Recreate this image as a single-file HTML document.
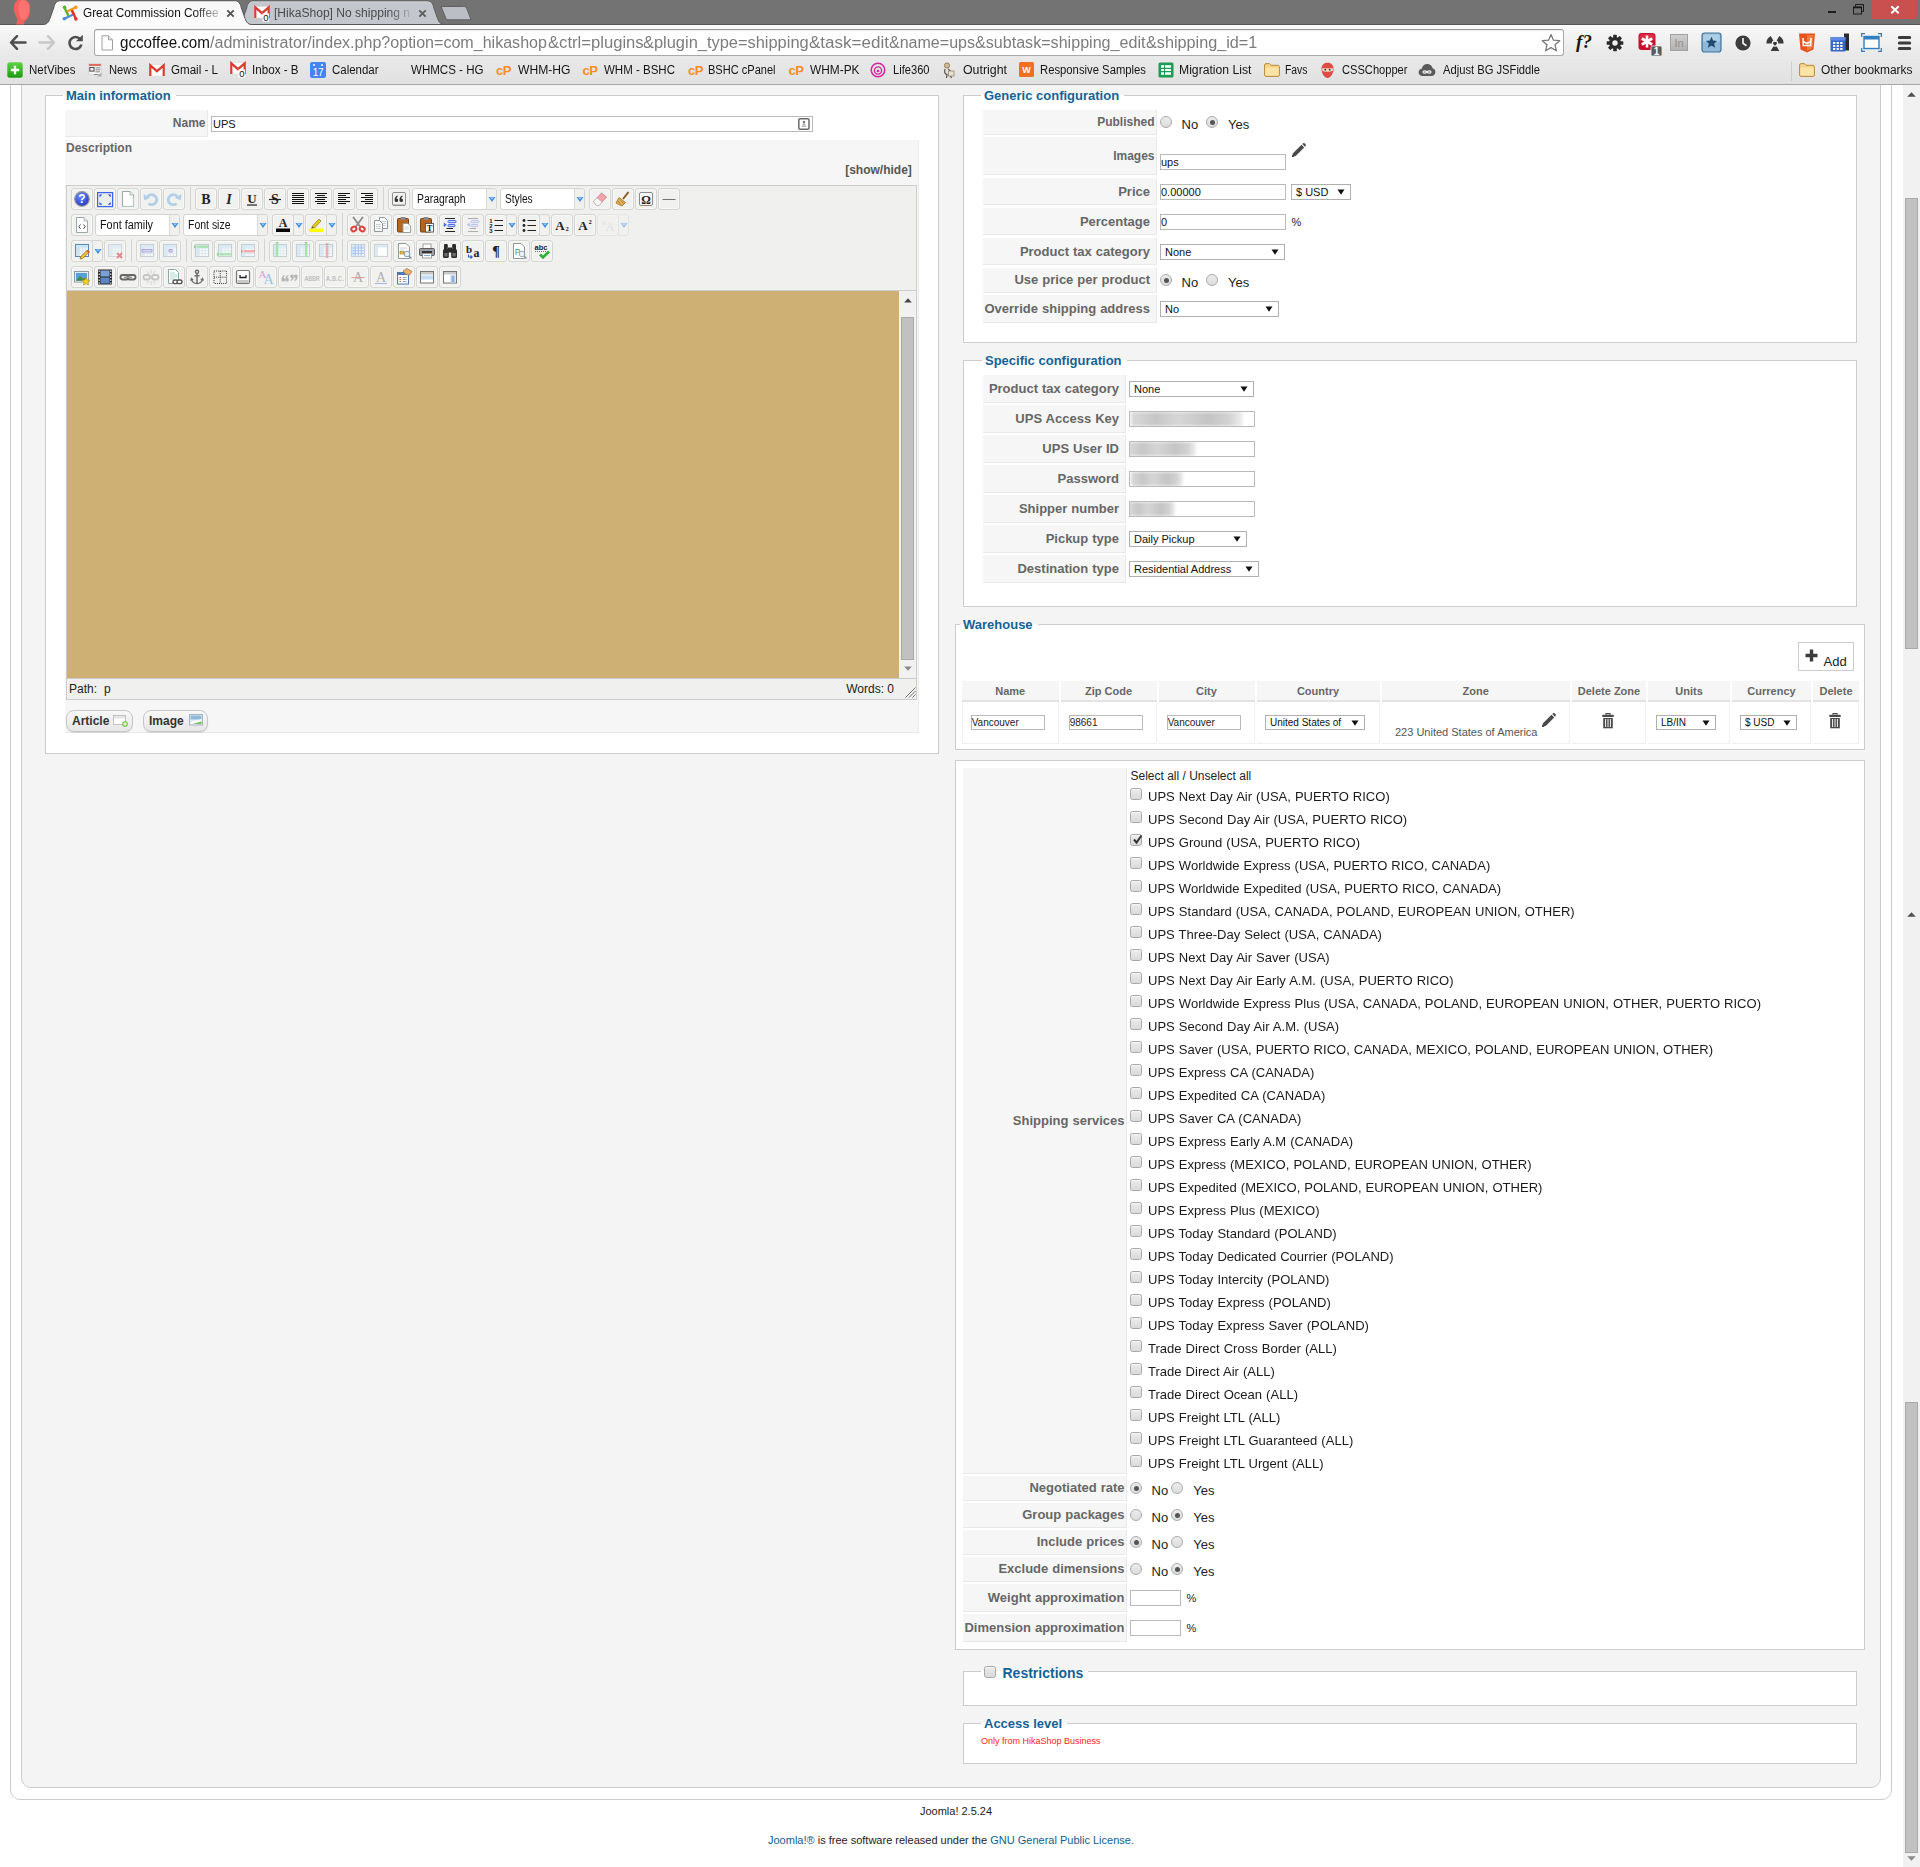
<!DOCTYPE html>
<html lang="en"><head><meta charset="utf-8"><title>Great Commission Coffee - Administration</title>
<style>
html,body{margin:0;padding:0}
body{width:1920px;height:1867px;position:relative;overflow:hidden;background:#fff;font-family:"Liberation Sans",Arial,sans-serif;font-size:13px}
#root{position:absolute;left:0;top:0;width:1920px;height:1867px;overflow:hidden}
#root div,#root span,#root svg,#root i{position:absolute;display:block}
#root span{white-space:nowrap}
</style></head>
<body><div id="root">
<div style="left:0px;top:85px;width:1920px;height:1782px;background:#fff;"></div>
<div style="left:10px;top:40px;width:1880px;height:1758px;border:1px solid #ccc;border-radius:10px;background:#fff;"></div>
<div style="left:21px;top:40px;width:1858px;height:1746px;border:1px solid #ccc;border-radius:10px;background:#f4f4f4;"></div>
<div style="left:45px;top:95px;width:894px;height:659px;box-sizing:border-box;background:#fff;border:1px solid #ccc;"></div><div style="left:63px;top:95px;width:112.703125px;height:1px;background:#fff;"></div><span style="top:87.18px;font-size:13px;line-height:17px;color:#146295;font-weight:bold;left:66.00px;transform-origin:0 50%;">Main information</span>
<div style="left:65px;top:110px;width:143px;height:27px;box-sizing:border-box;background:#f6f6f6;border-bottom:1px solid #e9e9e9;border-right:1px solid #e9e9e9;"></div><span style="top:114.84px;font-size:12px;line-height:16px;color:#666;font-weight:bold;right:1714.50px;transform-origin:100% 50%;word-spacing:.4px;">Name</span>
<div style="left:211px;top:116px;width:602px;height:16px;box-sizing:border-box;background:#fff;border:1px solid #b9b9b9;"></div><span style="top:117.15px;font-size:11px;line-height:14px;color:#111;left:213.00px;transform-origin:0 50%;">UPS</span>
<svg style="left:798px;top:118px" width="12" height="12" viewBox="0 0 12 12"><rect x="0.800" y="0.800" width="10.200" height="10.400" rx="1.200" fill="#fff" stroke="#6a6a6a" stroke-width="1.500"/><circle cx="5.900" cy="3.900" r="1.200" fill="#777"/><path d="M4.200 6.500 C4.200 5 7.600 5 7.600 6.500 Z" fill="#777"/><rect x="3.800" y="7.300" width="4.200" height="1.600" fill="#b4b4b4"/></svg>
<div style="left:65px;top:140px;width:854px;height:593px;box-sizing:border-box;background:#f6f6f6;border-bottom:1px solid #e9e9e9;border-right:1px solid #ececec;"></div>
<span style="top:139.84px;font-size:12px;line-height:16px;color:#666;font-weight:bold;left:66.00px;transform-origin:0 50%;">Description</span>
<span style="top:161.84px;font-size:12px;line-height:16px;color:#555;font-weight:bold;right:1008.20px;transform-origin:100% 50%;">[show/hide]</span>
<div style="left:66px;top:185px;width:851px;height:515px;box-sizing:border-box;background:#f0f0ee;border:1px solid #ccc;"></div>
<div class="tb" style="left:71px;top:188px;width:20px;height:20px;border:1px solid #d4d4d1;border-radius:3px;background:#f1f1ef;box-shadow:inset 0 0 0 1px rgba(255,255,255,.5);"><svg style="left:0;top:0" width="20" height="20" viewBox="0 0 20 20"><defs><radialGradient id="hg" cx=".4" cy=".3" r=".8"><stop offset="0" stop-color="#6a8cff"/><stop offset="1" stop-color="#1a2fc0"/></radialGradient></defs><circle cx="10" cy="10" r="7.300" fill="url(#hg)" stroke="#9a9a9a" stroke-width="1.200"/><text x="10" y="14.300" font-size="12" font-weight="bold" text-anchor="middle" fill="#fff" font-family="Liberation Sans, sans-serif">?</text></svg></div>
<div class="tb" style="left:94px;top:188px;width:20px;height:20px;border:1px solid #d4d4d1;border-radius:3px;background:#f1f1ef;box-shadow:inset 0 0 0 1px rgba(255,255,255,.5);"><svg style="left:0;top:0" width="20" height="20" viewBox="0 0 20 20"><rect x="2.600" y="3.600" width="15" height="14" fill="#ececec" stroke="#3f62ee" stroke-width="1.200"/><path d="M4.500 5.500 H7.300 L4.500 8.300 Z M15.700 5.500 V8.300 L12.900 5.500 Z M15.700 15.700 H12.900 L15.700 12.900 Z M4.500 15.700 V12.900 L7.300 15.700 Z" fill="#2a45d6"/></svg></div>
<div class="tb" style="left:117px;top:188px;width:20px;height:20px;border:1px solid #d4d4d1;border-radius:3px;background:#f1f1ef;box-shadow:inset 0 0 0 1px rgba(255,255,255,.5);"><svg style="left:0;top:0" width="20" height="20" viewBox="0 0 20 20"><path d="M4.500 2.500 H12 L15.500 6 V17.500 H4.500 Z" fill="#fff" stroke="#9aa" stroke-width="1"/><path d="M12 2.500 V6 H15.500" fill="#e8eef0" stroke="#9aa" stroke-width=".8"/><path d="M5 17 H15 V8" fill="none" stroke="#dfe8e8" stroke-width="1"/></svg></div>
<div class="tb" style="left:140px;top:188px;width:20px;height:20px;border:1px solid #d4d4d1;border-radius:3px;background:#f1f1ef;box-shadow:inset 0 0 0 1px rgba(255,255,255,.5);"><svg style="left:0;top:0" width="20" height="20" viewBox="0 0 20 20"><g opacity=".45"><path d="M6 9 A5 5 0 1 1 7.500 14.500" fill="none" stroke="#6aa8de" stroke-width="2.800"/><path d="M2.500 5 L3.200 11.200 L9 9 Z" fill="#6aa8de"/></g></svg></div>
<div class="tb" style="left:163px;top:188px;width:20px;height:20px;border:1px solid #d4d4d1;border-radius:3px;background:#f1f1ef;box-shadow:inset 0 0 0 1px rgba(255,255,255,.5);"><svg style="left:0;top:0" width="20" height="20" viewBox="0 0 20 20"><g opacity=".45"><path d="M14 9 A5 5 0 1 0 12.500 14.500" fill="none" stroke="#6aa8de" stroke-width="2.800"/><path d="M17.500 5 L16.800 11.200 L11 9 Z" fill="#6aa8de"/></g></svg></div>
<div style="left:190px;top:187px;width:1px;height:23px;background:#d4d4d0;"></div>
<div class="tb" style="left:195px;top:188px;width:20px;height:20px;border:1px solid #d4d4d1;border-radius:3px;background:#f1f1ef;box-shadow:inset 0 0 0 1px rgba(255,255,255,.5);"><svg style="left:0;top:0" width="20" height="20" viewBox="0 0 20 20"><text x="10" y="14.800" font-size="14" font-weight="bold" text-anchor="middle" fill="#222" font-family="Liberation Serif, serif">B</text></svg></div>
<div class="tb" style="left:218px;top:188px;width:20px;height:20px;border:1px solid #d4d4d1;border-radius:3px;background:#f1f1ef;box-shadow:inset 0 0 0 1px rgba(255,255,255,.5);"><svg style="left:0;top:0" width="20" height="20" viewBox="0 0 20 20"><text x="10" y="14.800" font-size="14" font-weight="bold" font-style="italic" text-anchor="middle" fill="#222" font-family="Liberation Serif, serif">I</text></svg></div>
<div class="tb" style="left:241px;top:188px;width:20px;height:20px;border:1px solid #d4d4d1;border-radius:3px;background:#f1f1ef;box-shadow:inset 0 0 0 1px rgba(255,255,255,.5);"><svg style="left:0;top:0" width="20" height="20" viewBox="0 0 20 20"><text x="10" y="13.800" font-size="13" font-weight="bold" text-anchor="middle" fill="#222" font-family="Liberation Serif, serif">U</text><path d="M5 16 H15" stroke="#222" stroke-width="1.200"/></svg></div>
<div class="tb" style="left:264px;top:188px;width:20px;height:20px;border:1px solid #d4d4d1;border-radius:3px;background:#f1f1ef;box-shadow:inset 0 0 0 1px rgba(255,255,255,.5);"><svg style="left:0;top:0" width="20" height="20" viewBox="0 0 20 20"><text x="10" y="14.800" font-size="14" font-weight="bold" text-anchor="middle" fill="#222" font-family="Liberation Serif, serif">S</text><path d="M4 10.500 H16" stroke="#222" stroke-width="1.200"/></svg></div>
<div class="tb" style="left:287px;top:188px;width:20px;height:20px;border:1px solid #d4d4d1;border-radius:3px;background:#f1f1ef;box-shadow:inset 0 0 0 1px rgba(255,255,255,.5);"><svg style="left:0;top:0" width="20" height="20" viewBox="0 0 20 20"><path d="M4 4.5 H16 M4 6.5 H16 M4 8.5 H16 M4 10.5 H16 M4 12.5 H16 M4 14.5 H16" stroke="#111" stroke-width="1"/></svg></div>
<div class="tb" style="left:310px;top:188px;width:20px;height:20px;border:1px solid #d4d4d1;border-radius:3px;background:#f1f1ef;box-shadow:inset 0 0 0 1px rgba(255,255,255,.5);"><svg style="left:0;top:0" width="20" height="20" viewBox="0 0 20 20"><path d="M4 4.5 H16 M6 6.5 H14 M4 8.5 H16 M6 10.5 H14 M4 12.5 H16 M6 14.5 H14" stroke="#111" stroke-width="1"/></svg></div>
<div class="tb" style="left:333px;top:188px;width:20px;height:20px;border:1px solid #d4d4d1;border-radius:3px;background:#f1f1ef;box-shadow:inset 0 0 0 1px rgba(255,255,255,.5);"><svg style="left:0;top:0" width="20" height="20" viewBox="0 0 20 20"><path d="M4 4.5 H16 M4 6.5 H12 M4 8.5 H16 M4 10.5 H12 M4 12.5 H16 M4 14.5 H12" stroke="#111" stroke-width="1"/></svg></div>
<div class="tb" style="left:356px;top:188px;width:20px;height:20px;border:1px solid #d4d4d1;border-radius:3px;background:#f1f1ef;box-shadow:inset 0 0 0 1px rgba(255,255,255,.5);"><svg style="left:0;top:0" width="20" height="20" viewBox="0 0 20 20"><path d="M4 4.5 H16 M8 6.5 H16 M4 8.5 H16 M8 10.5 H16 M4 12.5 H16 M8 14.5 H16" stroke="#111" stroke-width="1"/></svg></div>
<div style="left:383px;top:187px;width:1px;height:23px;background:#d4d4d0;"></div>
<div class="tb" style="left:388px;top:188px;width:20px;height:20px;border:1px solid #d4d4d1;border-radius:3px;background:#f1f1ef;box-shadow:inset 0 0 0 1px rgba(255,255,255,.5);"><svg style="left:0;top:0" width="20" height="20" viewBox="0 0 20 20"><rect x="3.500" y="3.500" width="13" height="13" rx="1.500" fill="#f2f2f2" stroke="#8e8e8e" stroke-width="1"/><path d="M4 15.500 H16" stroke="#c4c4c4" stroke-width="1"/><path transform="translate(5.6 6.5)" d="M0 4.600 C0 2 1.300 0.500 3.200 0 L3.200 1 C2.300 1.500 1.900 2.200 1.900 3 A1.800 1.800 0 1 1 0 4.600 Z" fill="#333"/><path transform="translate(10.4 6.5)" d="M0 4.600 C0 2 1.300 0.500 3.200 0 L3.200 1 C2.300 1.500 1.900 2.200 1.900 3 A1.800 1.800 0 1 1 0 4.600 Z" fill="#333"/></svg></div>
<div style="left:412px;top:188px;width:83px;height:20px;border:1px solid #d4d4d1;border-radius:3px;background:#fff;"></div><div style="left:486px;top:189px;width:9px;height:20px;background:#f0f0ee;border-left:1px solid #d8d8d4;border-radius:0 2px 2px 0;"><svg style="left:0.500px;top:6.500px" width="8" height="7" viewBox="0 0 8 7"><path d="M0.500 1 H7.500 L4 6 Z" fill="#3a8ee6"/><path d="M1.800 1.600 H6.200 L4 3.300 Z" fill="#a8d4fa"/></svg></div><span style="top:190.64px;font-size:12px;line-height:16px;color:#111;left:416.70px;transform-origin:0 50%;transform:scaleX(0.8656);">Paragraph</span>
<div style="left:500px;top:188px;width:83px;height:20px;border:1px solid #d4d4d1;border-radius:3px;background:#fff;"></div><div style="left:574px;top:189px;width:9px;height:20px;background:#f0f0ee;border-left:1px solid #d8d8d4;border-radius:0 2px 2px 0;"><svg style="left:0.500px;top:6.500px" width="8" height="7" viewBox="0 0 8 7"><path d="M0.500 1 H7.500 L4 6 Z" fill="#3a8ee6"/><path d="M1.800 1.600 H6.200 L4 3.300 Z" fill="#a8d4fa"/></svg></div><span style="top:190.64px;font-size:12px;line-height:16px;color:#111;left:504.70px;transform-origin:0 50%;transform:scaleX(0.8478);">Styles</span>
<div class="tb" style="left:589px;top:188px;width:20px;height:20px;border:1px solid #d4d4d1;border-radius:3px;background:#f1f1ef;box-shadow:inset 0 0 0 1px rgba(255,255,255,.5);"><svg style="left:0;top:0" width="20" height="20" viewBox="0 0 20 20"><path d="M3.500 12.500 L11.500 4 L16.500 8 L9 16.500 H6.500 Z" fill="#f3a3ac" stroke="#c9808a" stroke-width=".8"/><path d="M3.500 12.500 L7 9 L12 13 L9 16.500 H6.500 Z" fill="#fafafa" stroke="#bbb" stroke-width=".8"/></svg></div>
<div class="tb" style="left:612px;top:188px;width:20px;height:20px;border:1px solid #d4d4d1;border-radius:3px;background:#f1f1ef;box-shadow:inset 0 0 0 1px rgba(255,255,255,.5);"><svg style="left:0;top:0" width="20" height="20" viewBox="0 0 20 20"><path d="M15.500 3 L10 10" stroke="#8a5a2a" stroke-width="2"/><path d="M6 8.500 L12.500 13.500 L9 17 L3 14 Z" fill="#e2b35a" stroke="#a8782c" stroke-width=".9"/><path d="M5 12 L8 15.500 M7 10.500 L10.500 14.500" stroke="#a8782c" stroke-width=".8"/></svg></div>
<div class="tb" style="left:635px;top:188px;width:20px;height:20px;border:1px solid #d4d4d1;border-radius:3px;background:#f1f1ef;box-shadow:inset 0 0 0 1px rgba(255,255,255,.5);"><svg style="left:0;top:0" width="20" height="20" viewBox="0 0 20 20"><rect x="3.500" y="3.500" width="13" height="13" rx="1.500" fill="#f8f8f8" stroke="#8a8a8a" stroke-width="1"/><text x="10" y="14.500" font-size="12" font-weight="bold" text-anchor="middle" fill="#222" font-family="Liberation Serif, serif">Ω</text></svg></div>
<div class="tb" style="left:658px;top:188px;width:20px;height:20px;border:1px solid #d4d4d1;border-radius:3px;background:#f1f1ef;box-shadow:inset 0 0 0 1px rgba(255,255,255,.5);"><svg style="left:0;top:0" width="20" height="20" viewBox="0 0 20 20"><path d="M3.500 10.500 H16.500" stroke="#777" stroke-width="1"/></svg></div>
<div class="tb" style="left:71px;top:214px;width:20px;height:20px;border:1px solid #d4d4d1;border-radius:3px;background:#f1f1ef;box-shadow:inset 0 0 0 1px rgba(255,255,255,.5);"><svg style="left:0;top:0" width="20" height="20" viewBox="0 0 20 20"><path d="M4.500 2.500 H12 L15.500 6 V17.500 H4.500 Z" fill="#fff" stroke="#9aa" stroke-width="1"/><path d="M12 2.500 V6 H15.500" fill="#e8eef0" stroke="#9aa" stroke-width=".8"/><path d="M8.500 9.500 L6.800 11.700 L8.500 13.900 M11.500 9.500 L13.200 11.700 L11.500 13.900" fill="none" stroke="#444" stroke-width="1"/></svg></div>
<div style="left:95px;top:214px;width:83px;height:20px;border:1px solid #d4d4d1;border-radius:3px;background:#fff;"></div><div style="left:169px;top:215px;width:9px;height:20px;background:#f0f0ee;border-left:1px solid #d8d8d4;border-radius:0 2px 2px 0;"><svg style="left:0.500px;top:6.500px" width="8" height="7" viewBox="0 0 8 7"><path d="M0.500 1 H7.500 L4 6 Z" fill="#3a8ee6"/><path d="M1.800 1.600 H6.200 L4 3.300 Z" fill="#a8d4fa"/></svg></div><span style="top:216.64px;font-size:12px;line-height:16px;color:#111;left:99.70px;transform-origin:0 50%;transform:scaleX(0.9033);">Font family</span>
<div style="left:183px;top:214px;width:83px;height:20px;border:1px solid #d4d4d1;border-radius:3px;background:#fff;"></div><div style="left:257px;top:215px;width:9px;height:20px;background:#f0f0ee;border-left:1px solid #d8d8d4;border-radius:0 2px 2px 0;"><svg style="left:0.500px;top:6.500px" width="8" height="7" viewBox="0 0 8 7"><path d="M0.500 1 H7.500 L4 6 Z" fill="#3a8ee6"/><path d="M1.800 1.600 H6.200 L4 3.300 Z" fill="#a8d4fa"/></svg></div><span style="top:216.64px;font-size:12px;line-height:16px;color:#111;left:187.70px;transform-origin:0 50%;transform:scaleX(0.8732);">Font size</span>
<div class="tb" style="left:272px;top:214px;width:20px;height:20px;border:1px solid #d4d4d1;border-radius:3px;background:#f1f1ef;box-shadow:inset 0 0 0 1px rgba(255,255,255,.5);"><svg style="left:0;top:0" width="20" height="20" viewBox="0 0 20 20"><text x="10" y="12" font-size="12" font-weight="bold" text-anchor="middle" fill="#222" font-family="Liberation Serif, serif">A</text><rect x="3" y="13.500" width="14" height="3.500" fill="#000"/></svg></div>
<div style="left:293px;top:214px;width:9px;height:20px;border:1px solid #d4d4d1;border-radius:0 3px 3px 0;background:#f1f1ef;"><svg style="left:0.500px;top:7px" width="8" height="7" viewBox="0 0 8 7"><path d="M0.500 1 H7.500 L4 6 Z" fill="#3a8ee6"/><path d="M1.800 1.600 H6.200 L4 3.300 Z" fill="#a8d4fa"/></svg></div>
<div class="tb" style="left:305px;top:214px;width:20px;height:20px;border:1px solid #d4d4d1;border-radius:3px;background:#f1f1ef;box-shadow:inset 0 0 0 1px rgba(255,255,255,.5);"><svg style="left:0;top:0" width="20" height="20" viewBox="0 0 20 20"><path d="M6 11.500 L13 4 L15 6 L8.500 13 Z" fill="#e6d000" stroke="#8a7a20" stroke-width=".7"/><path d="M6 11.500 L5 14 L8.500 13 Z" fill="#555"/><rect x="3" y="13.500" width="14" height="3.500" fill="#ffff00"/></svg></div>
<div style="left:326px;top:214px;width:9px;height:20px;border:1px solid #d4d4d1;border-radius:0 3px 3px 0;background:#f1f1ef;"><svg style="left:0.500px;top:7px" width="8" height="7" viewBox="0 0 8 7"><path d="M0.500 1 H7.500 L4 6 Z" fill="#3a8ee6"/><path d="M1.800 1.600 H6.200 L4 3.300 Z" fill="#a8d4fa"/></svg></div>
<div style="left:342px;top:213px;width:1px;height:23px;background:#d4d4d0;"></div>
<div class="tb" style="left:347px;top:214px;width:20px;height:20px;border:1px solid #d4d4d1;border-radius:3px;background:#f1f1ef;box-shadow:inset 0 0 0 1px rgba(255,255,255,.5);"><svg style="left:0;top:0" width="20" height="20" viewBox="0 0 20 20"><path d="M5.500 2.500 L12 11.500 M14.500 2.500 L8 11.500" stroke="#8f8f8f" stroke-width="1.900" stroke-linecap="round"/><ellipse cx="5.800" cy="14" rx="2.600" ry="2.200" fill="none" stroke="#e0413d" stroke-width="1.900" transform="rotate(-30 5.800 14)"/><ellipse cx="14.200" cy="14" rx="2.600" ry="2.200" fill="none" stroke="#e0413d" stroke-width="1.900" transform="rotate(30 14.200 14)"/></svg></div>
<div class="tb" style="left:370px;top:214px;width:20px;height:20px;border:1px solid #d4d4d1;border-radius:3px;background:#f1f1ef;box-shadow:inset 0 0 0 1px rgba(255,255,255,.5);"><svg style="left:0;top:0" width="20" height="20" viewBox="0 0 20 20"><path d="M8.500 2.500 H13.500 L16.500 5.500 V13.500 H8.500 Z" fill="#fff" stroke="#8a9a9a" stroke-width="1"/><path d="M10 6.500 H15 M10 8.500 H15 M10 10.500 H15" stroke="#b8c4c4" stroke-width=".8"/><path d="M3.500 5.500 H8.500 L11.500 8.500 V16.500 H3.500 Z" fill="#fff" stroke="#8a9a9a" stroke-width="1"/><path d="M5 9.500 H10 M5 11.500 H10 M5 13.500 H10" stroke="#b8c4c4" stroke-width=".8"/></svg></div>
<div class="tb" style="left:393px;top:214px;width:20px;height:20px;border:1px solid #d4d4d1;border-radius:3px;background:#f1f1ef;box-shadow:inset 0 0 0 1px rgba(255,255,255,.5);"><svg style="left:0;top:0" width="20" height="20" viewBox="0 0 20 20"><rect x="3.500" y="3.500" width="11" height="13.500" rx="1" fill="#b5651d" stroke="#7a3f0f" stroke-width="1"/><rect x="6.500" y="2" width="5" height="3" rx=".8" fill="#8a8a8a"/><path d="M9 8.500 H14 L16.500 11 V17.500 H9 Z" fill="#fff" stroke="#8a9a9a" stroke-width=".9"/><path d="M10.500 12 H15 M10.500 14 H15" stroke="#b8c4c4" stroke-width=".8"/></svg></div>
<div class="tb" style="left:416px;top:214px;width:20px;height:20px;border:1px solid #d4d4d1;border-radius:3px;background:#f1f1ef;box-shadow:inset 0 0 0 1px rgba(255,255,255,.5);"><svg style="left:0;top:0" width="20" height="20" viewBox="0 0 20 20"><rect x="3.500" y="3.500" width="11" height="13.500" rx="1" fill="#b5651d" stroke="#7a3f0f" stroke-width="1"/><rect x="6.500" y="2" width="5" height="3" rx=".8" fill="#8a8a8a"/><rect x="8.500" y="8.500" width="8" height="8.500" fill="#fff" stroke="#555" stroke-width=".9"/><text x="12.500" y="15.800" font-size="8.500" font-weight="bold" text-anchor="middle" fill="#111" font-family="Liberation Serif, serif">T</text></svg></div>
<div class="tb" style="left:439px;top:214px;width:20px;height:20px;border:1px solid #d4d4d1;border-radius:3px;background:#f1f1ef;box-shadow:inset 0 0 0 1px rgba(255,255,255,.5);"><svg style="left:0;top:0" width="20" height="20" viewBox="0 0 20 20"><path d="M5 3.500 H15 M5 16.500 H15" stroke="#222" stroke-width="1"/><path d="M6.500 13.500 H13" stroke="#222" stroke-width="1"/><rect x="8" y="5.500" width="8" height="2.200" rx="1" fill="#cdd6fa" stroke="#3b5ee6" stroke-width=".9"/><rect x="8" y="9.500" width="7" height="2.200" rx="1" fill="#cdd6fa" stroke="#3b5ee6" stroke-width=".9"/><path d="M3.800 7.500 L6.800 9.700 L3.800 12 Z" fill="#3b5ee6"/></svg></div>
<div class="tb" style="left:462px;top:214px;width:20px;height:20px;border:1px solid #d4d4d1;border-radius:3px;background:#f1f1ef;box-shadow:inset 0 0 0 1px rgba(255,255,255,.5);"><svg style="left:0;top:0" width="20" height="20" viewBox="0 0 20 20"><g opacity=".33"><path d="M5 3.500 H15 M5 16.500 H15" stroke="#222" stroke-width="1"/><path d="M6.500 13.500 H13" stroke="#222" stroke-width="1"/><rect x="8" y="5.500" width="8" height="2.200" rx="1" fill="#cdd6fa" stroke="#3b5ee6" stroke-width=".9"/><rect x="8" y="9.500" width="7" height="2.200" rx="1" fill="#cdd6fa" stroke="#3b5ee6" stroke-width=".9"/><path d="M6.800 7.500 L3.800 9.700 L6.800 12 Z" fill="#3b5ee6"/></g></svg></div>
<div class="tb" style="left:485px;top:214px;width:20px;height:20px;border:1px solid #d4d4d1;border-radius:3px;background:#f1f1ef;box-shadow:inset 0 0 0 1px rgba(255,255,255,.5);"><svg style="left:0;top:0" width="20" height="20" viewBox="0 0 20 20"><path d="M8.500 5.500 H17 M8.500 10.500 H17 M8.500 15.500 H17" stroke="#222" stroke-width="1.100"/><text x="5" y="7.500" font-size="6" font-weight="bold" text-anchor="middle" fill="#222" font-family="Liberation Sans, sans-serif">1</text><text x="5" y="12.500" font-size="6" font-weight="bold" text-anchor="middle" fill="#222" font-family="Liberation Sans, sans-serif">2</text><text x="5" y="17.500" font-size="6" font-weight="bold" text-anchor="middle" fill="#222" font-family="Liberation Sans, sans-serif">3</text></svg></div>
<div style="left:506px;top:214px;width:9px;height:20px;border:1px solid #d4d4d1;border-radius:0 3px 3px 0;background:#f1f1ef;"><svg style="left:0.500px;top:7px" width="8" height="7" viewBox="0 0 8 7"><path d="M0.500 1 H7.500 L4 6 Z" fill="#3a8ee6"/><path d="M1.800 1.600 H6.200 L4 3.300 Z" fill="#a8d4fa"/></svg></div>
<div class="tb" style="left:518px;top:214px;width:20px;height:20px;border:1px solid #d4d4d1;border-radius:3px;background:#f1f1ef;box-shadow:inset 0 0 0 1px rgba(255,255,255,.5);"><svg style="left:0;top:0" width="20" height="20" viewBox="0 0 20 20"><path d="M8.500 5.500 H17 M8.500 10.500 H17 M8.500 15.500 H17" stroke="#222" stroke-width="1.100"/><circle cx="5" cy="5.500" r="1.400" fill="#222"/><circle cx="5" cy="10.500" r="1.400" fill="#222"/><circle cx="5" cy="15.500" r="1.400" fill="#222"/></svg></div>
<div style="left:539px;top:214px;width:9px;height:20px;border:1px solid #d4d4d1;border-radius:0 3px 3px 0;background:#f1f1ef;"><svg style="left:0.500px;top:7px" width="8" height="7" viewBox="0 0 8 7"><path d="M0.500 1 H7.500 L4 6 Z" fill="#3a8ee6"/><path d="M1.800 1.600 H6.200 L4 3.300 Z" fill="#a8d4fa"/></svg></div>
<div class="tb" style="left:551px;top:214px;width:20px;height:20px;border:1px solid #d4d4d1;border-radius:3px;background:#f1f1ef;box-shadow:inset 0 0 0 1px rgba(255,255,255,.5);"><svg style="left:0;top:0" width="20" height="20" viewBox="0 0 20 20"><text x="8" y="14.500" font-size="13" font-weight="bold" text-anchor="middle" fill="#222" font-family="Liberation Serif, serif">A</text><text x="15" y="16" font-size="6.500" font-weight="bold" text-anchor="middle" fill="#222" font-family="Liberation Serif, serif">2</text></svg></div>
<div class="tb" style="left:574px;top:214px;width:20px;height:20px;border:1px solid #d4d4d1;border-radius:3px;background:#f1f1ef;box-shadow:inset 0 0 0 1px rgba(255,255,255,.5);"><svg style="left:0;top:0" width="20" height="20" viewBox="0 0 20 20"><text x="8" y="14.500" font-size="13" font-weight="bold" text-anchor="middle" fill="#222" font-family="Liberation Serif, serif">A</text><text x="15" y="9" font-size="6.500" font-weight="bold" text-anchor="middle" fill="#222" font-family="Liberation Serif, serif">2</text></svg></div>
<div style="opacity:.45"><div class="tb" style="left:597px;top:214px;width:20px;height:20px;border:1px solid #d4d4d1;border-radius:3px;background:#f1f1ef;box-shadow:inset 0 0 0 1px rgba(255,255,255,.5);"><svg style="left:0;top:0" width="20" height="20" viewBox="0 0 20 20"><g opacity=".3"><text x="6" y="10" font-size="8" text-anchor="middle" fill="#777" font-family="Liberation Serif, serif">a</text><text x="12" y="16" font-size="12" text-anchor="middle" fill="#777" font-family="Liberation Serif, serif">A</text></g></svg></div><div style="left:618px;top:214px;width:9px;height:20px;border:1px solid #d4d4d1;border-radius:0 3px 3px 0;background:#f1f1ef;"><svg style="left:0.500px;top:7px" width="8" height="7" viewBox="0 0 8 7"><path d="M0.500 1 H7.500 L4 6 Z" fill="#3a8ee6"/><path d="M1.800 1.600 H6.200 L4 3.300 Z" fill="#a8d4fa"/></svg></div></div>
<div class="tb" style="left:71px;top:240px;width:20px;height:20px;border:1px solid #d4d4d1;border-radius:3px;background:#f1f1ef;box-shadow:inset 0 0 0 1px rgba(255,255,255,.5);"><svg style="left:0;top:0" width="20" height="20" viewBox="0 0 20 20"><g opacity="1"><rect x="3.500" y="3.500" width="13" height="12" fill="#fff" stroke="#a9b9c6" stroke-width="1"/><rect x="4" y="4" width="12" height="2.500" fill="#cfe6f7"/><rect x="4" y="4" width="3" height="11" fill="#cfe6f7"/><path d="M4 7 H16 M4 9.700 H16 M4 12.400 H16 M7.300 4 V15 M10.300 4 V15 M13.300 4 V15" stroke="#c4dff2" stroke-width=".8"/></g><rect x="3.500" y="3.500" width="13" height="12" fill="none" stroke="#5a87b5" stroke-width="1"/><path d="M15.500 9 L17.500 11 L10.500 17.500 L8 18 L8.800 15.500 Z" fill="#f2c230" stroke="#8a6a10" stroke-width=".7"/><path d="M15.500 9 L17.500 11 L16.600 11.900 L14.600 9.900 Z" fill="#e2403a"/></svg></div>
<div style="left:92px;top:240px;width:9px;height:20px;border:1px solid #d4d4d1;border-radius:0 3px 3px 0;background:#f1f1ef;"><svg style="left:0.500px;top:7px" width="8" height="7" viewBox="0 0 8 7"><path d="M0.500 1 H7.500 L4 6 Z" fill="#3a8ee6"/><path d="M1.800 1.600 H6.200 L4 3.300 Z" fill="#a8d4fa"/></svg></div>
<div class="tb" style="left:104px;top:240px;width:20px;height:20px;border:1px solid #d4d4d1;border-radius:3px;background:#f1f1ef;box-shadow:inset 0 0 0 1px rgba(255,255,255,.5);"><svg style="left:0;top:0" width="20" height="20" viewBox="0 0 20 20"><g opacity="0.45"><rect x="3.500" y="3.500" width="13" height="12" fill="#fff" stroke="#a9b9c6" stroke-width="1"/><rect x="4" y="4" width="12" height="2.500" fill="#cfe6f7"/><rect x="4" y="4" width="3" height="11" fill="#cfe6f7"/><path d="M4 7 H16 M4 9.700 H16 M4 12.400 H16 M7.300 4 V15 M10.300 4 V15 M13.300 4 V15" stroke="#c4dff2" stroke-width=".8"/></g><path d="M12 12 L17 17 M17 12 L12 17" stroke="#e58a8a" stroke-width="2"/></svg></div>
<div style="left:131px;top:239px;width:1px;height:23px;background:#d4d4d0;"></div>
<div class="tb" style="left:136px;top:240px;width:20px;height:20px;border:1px solid #d4d4d1;border-radius:3px;background:#f1f1ef;box-shadow:inset 0 0 0 1px rgba(255,255,255,.5);"><svg style="left:0;top:0" width="20" height="20" viewBox="0 0 20 20"><g opacity="0.6"><rect x="3.500" y="3.500" width="13" height="12" fill="#fff" stroke="#a9b9c6" stroke-width="1"/><rect x="4" y="4" width="12" height="2.500" fill="#cfe6f7"/><rect x="4" y="4" width="3" height="11" fill="#cfe6f7"/><path d="M4 7 H16 M4 9.700 H16 M4 12.400 H16 M7.300 4 V15 M10.300 4 V15 M13.300 4 V15" stroke="#c4dff2" stroke-width=".8"/></g><rect x="5" y="8.500" width="10" height="2.500" fill="#d9d2f2" stroke="#8f82d6" stroke-width=".8" opacity=".8"/></svg></div>
<div class="tb" style="left:159px;top:240px;width:20px;height:20px;border:1px solid #d4d4d1;border-radius:3px;background:#f1f1ef;box-shadow:inset 0 0 0 1px rgba(255,255,255,.5);"><svg style="left:0;top:0" width="20" height="20" viewBox="0 0 20 20"><g opacity="0.6"><rect x="3.500" y="3.500" width="13" height="12" fill="#fff" stroke="#a9b9c6" stroke-width="1"/><rect x="4" y="4" width="12" height="2.500" fill="#cfe6f7"/><rect x="4" y="4" width="3" height="11" fill="#cfe6f7"/><path d="M4 7 H16 M4 9.700 H16 M4 12.400 H16 M7.300 4 V15 M10.300 4 V15 M13.300 4 V15" stroke="#c4dff2" stroke-width=".8"/></g><rect x="9" y="8.500" width="3" height="2.500" fill="#d9d2f2" stroke="#8f82d6" stroke-width=".8" opacity=".8"/></svg></div>
<div style="left:186px;top:239px;width:1px;height:23px;background:#d4d4d0;"></div>
<div class="tb" style="left:191px;top:240px;width:20px;height:20px;border:1px solid #d4d4d1;border-radius:3px;background:#f1f1ef;box-shadow:inset 0 0 0 1px rgba(255,255,255,.5);"><svg style="left:0;top:0" width="20" height="20" viewBox="0 0 20 20"><g opacity="0.6"><rect x="3.500" y="3.500" width="13" height="12" fill="#fff" stroke="#a9b9c6" stroke-width="1"/><rect x="4" y="4" width="12" height="2.500" fill="#cfe6f7"/><rect x="4" y="4" width="3" height="11" fill="#cfe6f7"/><path d="M4 7 H16 M4 9.700 H16 M4 12.400 H16 M7.300 4 V15 M10.300 4 V15 M13.300 4 V15" stroke="#c4dff2" stroke-width=".8"/></g><rect x="5" y="4.500" width="11.500" height="2.500" rx="1" fill="#9fe09f" opacity=".8"/><path d="M2 4 L4.800 5.700 L2 7.500 Z" fill="#8fd48f"/></svg></div>
<div class="tb" style="left:214px;top:240px;width:20px;height:20px;border:1px solid #d4d4d1;border-radius:3px;background:#f1f1ef;box-shadow:inset 0 0 0 1px rgba(255,255,255,.5);"><svg style="left:0;top:0" width="20" height="20" viewBox="0 0 20 20"><g opacity="0.6"><rect x="3.500" y="3.500" width="13" height="12" fill="#fff" stroke="#a9b9c6" stroke-width="1"/><rect x="4" y="4" width="12" height="2.500" fill="#cfe6f7"/><rect x="4" y="4" width="3" height="11" fill="#cfe6f7"/><path d="M4 7 H16 M4 9.700 H16 M4 12.400 H16 M7.300 4 V15 M10.300 4 V15 M13.300 4 V15" stroke="#c4dff2" stroke-width=".8"/></g><rect x="5" y="12" width="11.500" height="2.500" rx="1" fill="#9fe09f" opacity=".8"/><path d="M2 11.500 L4.800 13.200 L2 15 Z" fill="#8fd48f"/></svg></div>
<div class="tb" style="left:237px;top:240px;width:20px;height:20px;border:1px solid #d4d4d1;border-radius:3px;background:#f1f1ef;box-shadow:inset 0 0 0 1px rgba(255,255,255,.5);"><svg style="left:0;top:0" width="20" height="20" viewBox="0 0 20 20"><g opacity="0.6"><rect x="3.500" y="3.500" width="13" height="12" fill="#fff" stroke="#a9b9c6" stroke-width="1"/><rect x="4" y="4" width="12" height="2.500" fill="#cfe6f7"/><rect x="4" y="4" width="3" height="11" fill="#cfe6f7"/><path d="M4 7 H16 M4 9.700 H16 M4 12.400 H16 M7.300 4 V15 M10.300 4 V15 M13.300 4 V15" stroke="#c4dff2" stroke-width=".8"/></g><rect x="6" y="9" width="11" height="2.500" rx=".5" fill="#f2a0a0" opacity=".85"/><path d="M3 8.500 L5.500 10.200 L3 12 Z" fill="#e98a8a"/></svg></div>
<div style="left:264px;top:239px;width:1px;height:23px;background:#d4d4d0;"></div>
<div class="tb" style="left:269px;top:240px;width:20px;height:20px;border:1px solid #d4d4d1;border-radius:3px;background:#f1f1ef;box-shadow:inset 0 0 0 1px rgba(255,255,255,.5);"><svg style="left:0;top:0" width="20" height="20" viewBox="0 0 20 20"><g opacity="0.6"><rect x="3.500" y="3.500" width="13" height="12" fill="#fff" stroke="#a9b9c6" stroke-width="1"/><rect x="4" y="4" width="12" height="2.500" fill="#cfe6f7"/><rect x="4" y="4" width="3" height="11" fill="#cfe6f7"/><path d="M4 7 H16 M4 9.700 H16 M4 12.400 H16 M7.300 4 V15 M10.300 4 V15 M13.300 4 V15" stroke="#c4dff2" stroke-width=".8"/></g><rect x="5.800" y="3" width="2.500" height="13" rx="1" fill="#9fe09f" opacity=".85"/><path d="M5.300 1 L7 3.500 L8.800 1 Z" fill="#8fd48f"/></svg></div>
<div class="tb" style="left:292px;top:240px;width:20px;height:20px;border:1px solid #d4d4d1;border-radius:3px;background:#f1f1ef;box-shadow:inset 0 0 0 1px rgba(255,255,255,.5);"><svg style="left:0;top:0" width="20" height="20" viewBox="0 0 20 20"><g opacity="0.6"><rect x="3.500" y="3.500" width="13" height="12" fill="#fff" stroke="#a9b9c6" stroke-width="1"/><rect x="4" y="4" width="12" height="2.500" fill="#cfe6f7"/><rect x="4" y="4" width="3" height="11" fill="#cfe6f7"/><path d="M4 7 H16 M4 9.700 H16 M4 12.400 H16 M7.300 4 V15 M10.300 4 V15 M13.300 4 V15" stroke="#c4dff2" stroke-width=".8"/></g><rect x="11.800" y="3" width="2.500" height="13" rx="1" fill="#9fe09f" opacity=".85"/><path d="M11.300 1 L13 3.500 L14.800 1 Z" fill="#8fd48f"/></svg></div>
<div class="tb" style="left:315px;top:240px;width:20px;height:20px;border:1px solid #d4d4d1;border-radius:3px;background:#f1f1ef;box-shadow:inset 0 0 0 1px rgba(255,255,255,.5);"><svg style="left:0;top:0" width="20" height="20" viewBox="0 0 20 20"><g opacity="0.6"><rect x="3.500" y="3.500" width="13" height="12" fill="#fff" stroke="#a9b9c6" stroke-width="1"/><rect x="4" y="4" width="12" height="2.500" fill="#cfe6f7"/><rect x="4" y="4" width="3" height="11" fill="#cfe6f7"/><path d="M4 7 H16 M4 9.700 H16 M4 12.400 H16 M7.300 4 V15 M10.300 4 V15 M13.300 4 V15" stroke="#c4dff2" stroke-width=".8"/></g><rect x="9.800" y="5" width="2.500" height="12" rx=".5" fill="#f2a0a0" opacity=".85"/><path d="M9.300 2.500 L11 5 L12.800 2.500 Z" fill="#e98a8a"/></svg></div>
<div style="left:342px;top:239px;width:1px;height:23px;background:#d4d4d0;"></div>
<div class="tb" style="left:347px;top:240px;width:20px;height:20px;border:1px solid #d4d4d1;border-radius:3px;background:#f1f1ef;box-shadow:inset 0 0 0 1px rgba(255,255,255,.5);"><svg style="left:0;top:0" width="20" height="20" viewBox="0 0 20 20"><g opacity="0.6"><rect x="3.500" y="3.500" width="13" height="12" fill="#fff" stroke="#a9b9c6" stroke-width="1"/><rect x="4" y="4" width="12" height="2.500" fill="#cfe6f7"/><rect x="4" y="4" width="3" height="11" fill="#cfe6f7"/><path d="M4 7 H16 M4 9.700 H16 M4 12.400 H16 M7.300 4 V15 M10.300 4 V15 M13.300 4 V15" stroke="#c4dff2" stroke-width=".8"/></g><path d="M4 7 H16 M4 9.700 H16 M4 12.400 H16 M7.300 4 V15 M10.300 4 V15 M13.300 4 V15" stroke="#a9c4f2" stroke-width="1"/></svg></div>
<div class="tb" style="left:370px;top:240px;width:20px;height:20px;border:1px solid #d4d4d1;border-radius:3px;background:#f1f1ef;box-shadow:inset 0 0 0 1px rgba(255,255,255,.5);"><svg style="left:0;top:0" width="20" height="20" viewBox="0 0 20 20"><g opacity="0.5"><rect x="3.500" y="3.500" width="13" height="12" fill="#fff" stroke="#a9b9c6" stroke-width="1"/><rect x="4" y="4" width="12" height="2.500" fill="#cfe6f7"/><rect x="4" y="4" width="3" height="11" fill="#cfe6f7"/><path d="M4 7 H16 M4 9.700 H16 M4 12.400 H16 M7.300 4 V15 M10.300 4 V15 M13.300 4 V15" stroke="#c4dff2" stroke-width=".8"/></g><rect x="7" y="6.500" width="8.500" height="8" fill="#fff" opacity=".9"/></svg></div>
<div class="tb" style="left:393px;top:240px;width:20px;height:20px;border:1px solid #d4d4d1;border-radius:3px;background:#f1f1ef;box-shadow:inset 0 0 0 1px rgba(255,255,255,.5);"><svg style="left:0;top:0" width="20" height="20" viewBox="0 0 20 20"><path d="M4.500 2.500 H12 L15.500 6 V17.500 H4.500 Z" fill="#fff" stroke="#8a9a9a" stroke-width="1"/><path d="M6 7 H13 M6 9 H10" stroke="#b8c4c4" stroke-width=".8"/><rect x="6" y="10.500" width="4" height="2.500" fill="#e9c13a" stroke="#8a6a10" stroke-width=".5"/><circle cx="13" cy="13" r="2.800" fill="#e6f2fa" stroke="#8a9aa8" stroke-width="1"/><path d="M15 15 L17.500 17.500" stroke="#8a9aa8" stroke-width="1.600"/></svg></div>
<div class="tb" style="left:416px;top:240px;width:20px;height:20px;border:1px solid #d4d4d1;border-radius:3px;background:#f1f1ef;box-shadow:inset 0 0 0 1px rgba(255,255,255,.5);"><svg style="left:0;top:0" width="20" height="20" viewBox="0 0 20 20"><rect x="6" y="3" width="8" height="5" fill="#fff" stroke="#8a8a8a" stroke-width=".8"/><rect x="2.500" y="7.500" width="15" height="7" rx="1" fill="#9a9da3" stroke="#555" stroke-width=".9"/><rect x="5" y="10" width="10" height="2" fill="#333"/><rect x="5.500" y="12.500" width="9" height="4.500" fill="#fff" stroke="#8a8a8a" stroke-width=".8"/><path d="M7 14.500 H13" stroke="#7ab0e0" stroke-width="1"/></svg></div>
<div class="tb" style="left:439px;top:240px;width:20px;height:20px;border:1px solid #d4d4d1;border-radius:3px;background:#f1f1ef;box-shadow:inset 0 0 0 1px rgba(255,255,255,.5);"><svg style="left:0;top:0" width="20" height="20" viewBox="0 0 20 20"><g fill="#2b2b2b"><rect x="3" y="8" width="5.800" height="9" rx="1.500"/><rect x="11.200" y="8" width="5.800" height="9" rx="1.500"/><rect x="4" y="3" width="3.800" height="6" rx="1"/><rect x="12.200" y="3" width="3.800" height="6" rx="1"/><rect x="8" y="6.500" width="4" height="5"/></g><rect x="4.200" y="12" width="3.400" height="3.500" fill="#6a6a6a"/><rect x="12.400" y="12" width="3.400" height="3.500" fill="#6a6a6a"/></svg></div>
<div class="tb" style="left:462px;top:240px;width:20px;height:20px;border:1px solid #d4d4d1;border-radius:3px;background:#f1f1ef;box-shadow:inset 0 0 0 1px rgba(255,255,255,.5);"><svg style="left:0;top:0" width="20" height="20" viewBox="0 0 20 20"><text x="6" y="12" font-size="11" font-weight="bold" text-anchor="middle" fill="#222" font-family="Liberation Serif, serif">b</text><text x="13.500" y="16" font-size="12" font-weight="bold" text-anchor="middle" fill="#222" font-family="Liberation Serif, serif">a</text><path d="M5.500 13.500 V16 H9 M7.500 14.500 L9.200 16 L7.500 17.500" fill="none" stroke="#2a5fd0" stroke-width="1.100"/></svg></div>
<div class="tb" style="left:485px;top:240px;width:20px;height:20px;border:1px solid #d4d4d1;border-radius:3px;background:#f1f1ef;box-shadow:inset 0 0 0 1px rgba(255,255,255,.5);"><svg style="left:0;top:0" width="20" height="20" viewBox="0 0 20 20"><text x="10" y="15" font-size="14" font-weight="bold" text-anchor="middle" fill="#222" font-family="Liberation Serif, serif">¶</text></svg></div>
<div class="tb" style="left:508px;top:240px;width:20px;height:20px;border:1px solid #d4d4d1;border-radius:3px;background:#f1f1ef;box-shadow:inset 0 0 0 1px rgba(255,255,255,.5);"><svg style="left:0;top:0" width="20" height="20" viewBox="0 0 20 20"><path d="M4.500 2.500 H12 L15.500 6 V17.500 H4.500 Z" fill="#fff" stroke="#8a9a9a" stroke-width="1"/><text x="8.500" y="13.500" font-size="8.500" text-anchor="middle" fill="#3a9a5a" font-family="Liberation Sans, sans-serif">P</text><circle cx="13" cy="13" r="2.800" fill="#e6f2fa" stroke="#8a9aa8" stroke-width="1" opacity=".85"/><path d="M15 15 L17.500 17.500" stroke="#8a9aa8" stroke-width="1.600"/></svg></div>
<div class="tb" style="left:531px;top:240px;width:20px;height:20px;border:1px solid #d4d4d1;border-radius:3px;background:#f1f1ef;box-shadow:inset 0 0 0 1px rgba(255,255,255,.5);"><svg style="left:0;top:0" width="20" height="20" viewBox="0 0 20 20"><text x="9" y="8.500" font-size="7.500" font-weight="bold" text-anchor="middle" fill="#222" font-family="Liberation Sans, sans-serif">abc</text><path d="M3 10.500 H15" stroke="#555" stroke-width=".8" stroke-dasharray="1 1"/><path d="M8 13.500 L11 16.500 L17 10.500" fill="none" stroke="#2fae2f" stroke-width="2.600"/></svg></div>
<div class="tb" style="left:71px;top:266px;width:20px;height:20px;border:1px solid #d4d4d1;border-radius:3px;background:#f1f1ef;box-shadow:inset 0 0 0 1px rgba(255,255,255,.5);"><svg style="left:0;top:0" width="20" height="20" viewBox="0 0 20 20"><rect x="2.500" y="4.500" width="14" height="10.500" fill="#fff" stroke="#8a9aa8" stroke-width="1"/><rect x="3.800" y="5.800" width="11.400" height="7.900" fill="#5aa0d8"/><path d="M3.800 13.700 L8 9 L11 12 L13 10.500 L15.200 13.700 Z" fill="#4a8a3a"/><path d="M14 10.500 L15.200 13 L18 13.300 L16 15.200 L16.500 18 L14 16.600 L11.500 18 L12 15.200 L10 13.300 L12.800 13 Z" fill="#f2d020" stroke="#a88a10" stroke-width=".6"/></svg></div>
<div class="tb" style="left:94px;top:266px;width:20px;height:20px;border:1px solid #d4d4d1;border-radius:3px;background:#f1f1ef;box-shadow:inset 0 0 0 1px rgba(255,255,255,.5);"><svg style="left:0;top:0" width="20" height="20" viewBox="0 0 20 20"><rect x="3" y="2.500" width="14" height="15" fill="#2a2a2a"/><rect x="5.500" y="3.500" width="9" height="6" fill="#7aa0d8"/><rect x="5.500" y="10.500" width="9" height="6" fill="#5a86c6"/><g fill="#ddd"><rect x="3.600" y="3.500" width="1.200" height="1.500"/><rect x="3.600" y="6.500" width="1.200" height="1.500"/><rect x="3.600" y="9.500" width="1.200" height="1.500"/><rect x="3.600" y="12.500" width="1.200" height="1.500"/><rect x="3.600" y="15.300" width="1.200" height="1.500"/><rect x="15.200" y="3.500" width="1.200" height="1.500"/><rect x="15.200" y="6.500" width="1.200" height="1.500"/><rect x="15.200" y="9.500" width="1.200" height="1.500"/><rect x="15.200" y="12.500" width="1.200" height="1.500"/><rect x="15.200" y="15.300" width="1.200" height="1.500"/></g></svg></div>
<div class="tb" style="left:117px;top:266px;width:20px;height:20px;border:1px solid #d4d4d1;border-radius:3px;background:#f1f1ef;box-shadow:inset 0 0 0 1px rgba(255,255,255,.5);"><svg style="left:0;top:0" width="20" height="20" viewBox="0 0 20 20"><g fill="none" stroke="#666" stroke-width="1.900"><rect x="2.500" y="8" width="8" height="4.500" rx="2.200"/><rect x="9.500" y="8" width="8" height="4.500" rx="2.200"/></g><path d="M6 10.200 H14" stroke="#999" stroke-width="1.500"/></svg></div>
<div class="tb" style="left:140px;top:266px;width:20px;height:20px;border:1px solid #d4d4d1;border-radius:3px;background:#f1f1ef;box-shadow:inset 0 0 0 1px rgba(255,255,255,.5);"><svg style="left:0;top:0" width="20" height="20" viewBox="0 0 20 20"><g opacity=".3"><g fill="none" stroke="#666" stroke-width="1.900"><rect x="2.500" y="8" width="6.500" height="4.500" rx="2.200"/><rect x="11" y="8" width="6.500" height="4.500" rx="2.200"/></g><path d="M10 2.500 V6.500 M10 14 V18 M6 4 L8 7 M14 4 L12 7 M6 16.500 L8 13.500 M14 16.500 L12 13.500" stroke="#888" stroke-width=".9"/></g></svg></div>
<div class="tb" style="left:163px;top:266px;width:20px;height:20px;border:1px solid #d4d4d1;border-radius:3px;background:#f1f1ef;box-shadow:inset 0 0 0 1px rgba(255,255,255,.5);"><svg style="left:0;top:0" width="20" height="20" viewBox="0 0 20 20"><path d="M4.500 2.500 H11.500 L14.500 5.500 V16.500 H4.500 Z" fill="#fff" stroke="#8aa" stroke-width="1"/><path d="M6 6 H11 M6 8 H13 M6 10 H13 M6 12 H10" stroke="#a8d0c8" stroke-width=".9"/><g fill="#fff" stroke="#555" stroke-width="1.400"><rect x="9" y="13" width="5" height="3.600" rx="1.800"/><rect x="13" y="13" width="5" height="3.600" rx="1.800"/></g></svg></div>
<div class="tb" style="left:186px;top:266px;width:20px;height:20px;border:1px solid #d4d4d1;border-radius:3px;background:#f1f1ef;box-shadow:inset 0 0 0 1px rgba(255,255,255,.5);"><svg style="left:0;top:0" width="20" height="20" viewBox="0 0 20 20"><g fill="none" stroke="#6e6e6e" stroke-width="1.500"><circle cx="10" cy="4.800" r="1.600"/><path d="M10 6.500 V16.500 M7.500 8.800 H12.500 M4.500 12 C5 15 7.500 16.500 10 16.500 C12.500 16.500 15 15 15.500 12"/></g><path d="M3 13.800 L4.300 10.300 L6.800 13 Z M17 13.800 L15.700 10.300 L13.200 13 Z" fill="#6e6e6e"/></svg></div>
<div class="tb" style="left:209px;top:266px;width:20px;height:20px;border:1px solid #d4d4d1;border-radius:3px;background:#f1f1ef;box-shadow:inset 0 0 0 1px rgba(255,255,255,.5);"><svg style="left:0;top:0" width="20" height="20" viewBox="0 0 20 20"><rect x="4" y="4" width="12.500" height="12.500" fill="none" stroke="#333" stroke-width="1" stroke-dasharray="1 1.100"/><path d="M10.200 4 V16.500 M4 10.200 H16.500" stroke="#333" stroke-width="1" stroke-dasharray="1 1.100"/></svg></div>
<div class="tb" style="left:232px;top:266px;width:20px;height:20px;border:1px solid #d4d4d1;border-radius:3px;background:#f1f1ef;box-shadow:inset 0 0 0 1px rgba(255,255,255,.5);"><svg style="left:0;top:0" width="20" height="20" viewBox="0 0 20 20"><rect x="3.500" y="3.500" width="13" height="13" rx="1.500" fill="#fafafa" stroke="#777" stroke-width="1.200"/><rect x="4.500" y="13" width="11" height="3" fill="#c8c8c8"/><path d="M7 8 V10.500 H13 V8" fill="none" stroke="#222" stroke-width="1.300"/></svg></div>
<div class="tb" style="left:255px;top:266px;width:20px;height:20px;border:1px solid #d4d4d1;border-radius:3px;background:#f1f1ef;box-shadow:inset 0 0 0 1px rgba(255,255,255,.5);"><svg style="left:0;top:0" width="20" height="20" viewBox="0 0 20 20"><text x="6.500" y="11" font-size="11" text-anchor="middle" fill="#d9a0d8" font-family="Liberation Serif, serif">A</text><text x="12.500" y="17" font-size="14" text-anchor="middle" fill="#9ac4e6" font-family="Liberation Serif, serif">A</text></svg></div>
<div class="tb" style="left:278px;top:266px;width:20px;height:20px;border:1px solid #d4d4d1;border-radius:3px;background:#f1f1ef;box-shadow:inset 0 0 0 1px rgba(255,255,255,.5);"><svg style="left:0;top:0" width="20" height="20" viewBox="0 0 20 20"><path transform="translate(2.5 8)" d="M0 4.600 C0 2 1.300 0.500 3.200 0 L3.200 1 C2.300 1.500 1.900 2.200 1.900 3 A1.800 1.800 0 1 1 0 4.600 Z" fill="#b4b4b4"/><path transform="translate(6.3 8)" d="M0 4.600 C0 2 1.300 0.500 3.200 0 L3.200 1 C2.300 1.500 1.900 2.200 1.900 3 A1.800 1.800 0 1 1 0 4.600 Z" fill="#b4b4b4"/><path transform="translate(10.8 8) rotate(180 2 3)" d="M0 4.600 C0 2 1.300 0.500 3.200 0 L3.200 1 C2.300 1.500 1.900 2.200 1.900 3 A1.800 1.800 0 1 1 0 4.600 Z" fill="#b4b4b4"/><path transform="translate(14.6 8) rotate(180 2 3)" d="M0 4.600 C0 2 1.300 0.500 3.200 0 L3.200 1 C2.300 1.500 1.900 2.200 1.900 3 A1.800 1.800 0 1 1 0 4.600 Z" fill="#b4b4b4"/></svg></div>
<div class="tb" style="left:301px;top:266px;width:20px;height:20px;border:1px solid #d4d4d1;border-radius:3px;background:#f1f1ef;box-shadow:inset 0 0 0 1px rgba(255,255,255,.5);"><svg style="left:0;top:0" width="20" height="20" viewBox="0 0 20 20"><text x="10" y="13.500" font-size="6.500" text-anchor="middle" fill="#b0b0b0" font-family="Liberation Mono, monospace" letter-spacing="-.2">ABBR</text></svg></div>
<div class="tb" style="left:324px;top:266px;width:20px;height:20px;border:1px solid #d4d4d1;border-radius:3px;background:#f1f1ef;box-shadow:inset 0 0 0 1px rgba(255,255,255,.5);"><svg style="left:0;top:0" width="20" height="20" viewBox="0 0 20 20"><text x="10" y="13.500" font-size="6.500" text-anchor="middle" fill="#b0b0b0" font-family="Liberation Mono, monospace" letter-spacing="-.9">A.B.C.</text></svg></div>
<div class="tb" style="left:347px;top:266px;width:20px;height:20px;border:1px solid #d4d4d1;border-radius:3px;background:#f1f1ef;box-shadow:inset 0 0 0 1px rgba(255,255,255,.5);"><svg style="left:0;top:0" width="20" height="20" viewBox="0 0 20 20"><text x="10" y="15" font-size="14" text-anchor="middle" fill="#b0b0b0" font-family="Liberation Serif, serif">A</text><path d="M3.500 10.500 H16.500" stroke="#e99" stroke-width="1"/></svg></div>
<div class="tb" style="left:370px;top:266px;width:20px;height:20px;border:1px solid #d4d4d1;border-radius:3px;background:#f1f1ef;box-shadow:inset 0 0 0 1px rgba(255,255,255,.5);"><svg style="left:0;top:0" width="20" height="20" viewBox="0 0 20 20"><text x="10" y="14.500" font-size="14" text-anchor="middle" fill="#b0b0b0" font-family="Liberation Serif, serif">A</text><path d="M4 16.500 H16" stroke="#a9b4e6" stroke-width="1"/></svg></div>
<div class="tb" style="left:393px;top:266px;width:20px;height:20px;border:1px solid #d4d4d1;border-radius:3px;background:#f1f1ef;box-shadow:inset 0 0 0 1px rgba(255,255,255,.5);"><svg style="left:0;top:0" width="20" height="20" viewBox="0 0 20 20"><rect x="3.500" y="5.500" width="11" height="11.500" fill="#fff" stroke="#4a7ab8" stroke-width="1"/><rect x="3.500" y="5.500" width="11" height="2.500" fill="#4a7ab8"/><path d="M5.500 10.500 H7 M5.500 12.500 H7 M5.500 14.500 H7" stroke="#d85a3a" stroke-width="1.200"/><path d="M8.500 10.500 H12.500 M8.500 12.500 H12.500 M8.500 14.500 H12.500" stroke="#9ab" stroke-width="1"/><path d="M9 4 L13 1.500 L18 4.500 L15.500 8 L12 7.500 Z" fill="#e8b070" stroke="#a8743a" stroke-width=".7"/></svg></div>
<div class="tb" style="left:416px;top:266px;width:20px;height:20px;border:1px solid #d4d4d1;border-radius:3px;background:#f1f1ef;box-shadow:inset 0 0 0 1px rgba(255,255,255,.5);"><svg style="left:0;top:0" width="20" height="20" viewBox="0 0 20 20"><rect x="3.500" y="4.500" width="13" height="11.500" fill="#fff" stroke="#777" stroke-width="1"/><rect x="4" y="5" width="12" height="2.500" fill="#c9c9c9"/><rect x="4" y="8.500" width="12" height="4" fill="#c4dcf5"/></svg></div>
<div class="tb" style="left:439px;top:266px;width:20px;height:20px;border:1px solid #d4d4d1;border-radius:3px;background:#f1f1ef;box-shadow:inset 0 0 0 1px rgba(255,255,255,.5);"><svg style="left:0;top:0" width="20" height="20" viewBox="0 0 20 20"><rect x="3.500" y="4.500" width="13" height="11.500" fill="#fff" stroke="#777" stroke-width="1"/><rect x="4" y="5" width="12" height="2.500" fill="#c9c9c9"/><rect x="10.500" y="8" width="5" height="7.500" fill="#c4dcf5"/><path d="M11.500 10 H14.500 M11.500 12 H14.500 M11.500 14 H14.500" stroke="#5a7ac6" stroke-width=".9"/></svg></div>
<div style="left:67px;top:290px;width:849px;height:1px;background:#ccc;"></div>
<div style="left:67px;top:291px;width:832px;height:387px;background:#cfb074;"></div>
<div style="left:899px;top:291px;width:17px;height:387px;background:#f1f1f1;"></div>
<svg style="left:904px;top:298px" width="8" height="5" viewBox="0 0 8 5"><path d="M4 0.300 L7.800 4.500 H0.200 Z" fill="#454545"/></svg>
<svg style="left:904px;top:666px" width="8" height="5" viewBox="0 0 8 5"><path d="M4 4.700 L7.800 0.500 H0.200 Z" fill="#8a8a8a"/></svg>
<div style="left:901px;top:317px;width:11px;height:341px;background:#c1c1c1;border:1px solid #a8a8a8;"></div>
<div style="left:67px;top:678px;width:849px;height:1px;background:#ccc;"></div>
<span style="top:681.04px;font-size:12px;line-height:16px;color:#222;left:69.00px;transform-origin:0 50%;">Path:</span>
<span style="top:681.04px;font-size:12px;line-height:16px;color:#222;left:104.00px;transform-origin:0 50%;">p</span>
<span style="top:681.04px;font-size:12px;line-height:16px;color:#222;right:1026.00px;transform-origin:100% 50%;">Words: 0</span>
<svg style="left:905px;top:687px" width="11" height="11" viewBox="0 0 11 11"><path d="M10.500 0.500 L0.500 10.500 M10.500 4 L4 10.500 M10.500 7.500 L7.500 10.500" stroke="#666" stroke-width=".9"/></svg>
<div style="left:66px;top:710px;width:65px;height:20px;border:1px solid #c6c6c6;border-radius:8px;background:linear-gradient(#f8f8f8,#e6e6e6);box-shadow:0 1px 1px rgba(0,0,0,.10);"></div><span style="top:712.84px;font-size:12px;line-height:16px;color:#333;font-weight:bold;left:72.00px;transform-origin:0 50%;">Article</span><svg style="left:113px;top:714px" width="16" height="14" viewBox="0 0 16 14"><rect x="0.500" y="1.500" width="12" height="9" fill="#fff" stroke="#c2c2c2" stroke-width="1"/><rect x="1" y="2" width="11" height="2.500" fill="#e4e4e4"/><circle cx="12" cy="10" r="2.600" fill="#8ed35a" stroke="#6ab83a" stroke-width=".6"/><path d="M12 8.400 V11.600 M10.400 10 H13.600" stroke="#fff" stroke-width="1"/></svg>
<div style="left:143px;top:710px;width:63px;height:20px;border:1px solid #c6c6c6;border-radius:8px;background:linear-gradient(#f8f8f8,#e6e6e6);box-shadow:0 1px 1px rgba(0,0,0,.10);"></div><span style="top:712.84px;font-size:12px;line-height:16px;color:#333;font-weight:bold;left:149.00px;transform-origin:0 50%;">Image</span><svg style="left:189px;top:714px" width="15" height="13" viewBox="0 0 15 13"><rect x="0.500" y="0.500" width="13" height="10.500" fill="#e4ecf2" stroke="#a9b6c0" stroke-width="1"/><rect x="1.500" y="1.500" width="11" height="4" fill="#8fb9dc"/><path d="M1.500 8.500 L12.500 5 V7.500 L1.500 10 Z" fill="#fff"/><path d="M4 10 L12.500 7.500 V10 Z" fill="#6fc04f"/></svg>
<div style="left:963px;top:95px;width:894px;height:248px;box-sizing:border-box;background:#fff;border:1px solid #ccc;"></div><div style="left:981px;top:95px;width:143.0625px;height:1px;background:#fff;"></div><span style="top:87.18px;font-size:13px;line-height:17px;color:#146295;font-weight:bold;left:984.00px;transform-origin:0 50%;">Generic configuration</span>
<div style="left:983px;top:110px;width:174px;height:25px;box-sizing:border-box;background:#f6f6f6;border-bottom:1px solid #e9e9e9;border-right:1px solid #e9e9e9;"></div><span style="top:114.34px;font-size:12px;line-height:16px;color:#666;font-weight:bold;right:765.50px;transform-origin:100% 50%;word-spacing:.4px;">Published</span>
<div style="left:1160px;top:116px;width:10px;height:10px;border:1px solid #ababab;border-radius:50%;background:linear-gradient(#ececec,#dcdcdc);"></div>
<span style="top:116.00px;font-size:13px;line-height:17px;color:#222;left:1181.50px;transform-origin:0 50%;">No</span>
<div style="left:1206px;top:116px;width:10px;height:10px;border:1px solid #ababab;border-radius:50%;background:linear-gradient(#ececec,#dcdcdc);"><i style="position:absolute;left:2.500px;top:2.500px;width:5px;height:5px;border-radius:50%;background:#555"></i></div>
<span style="top:116.00px;font-size:13px;line-height:17px;color:#222;left:1228.00px;transform-origin:0 50%;">Yes</span>
<div style="left:983px;top:137px;width:174px;height:38px;box-sizing:border-box;background:#f6f6f6;border-bottom:1px solid #e9e9e9;border-right:1px solid #e9e9e9;"></div><span style="top:147.64px;font-size:12px;line-height:16px;color:#666;font-weight:bold;right:765.50px;transform-origin:100% 50%;word-spacing:.4px;">Images</span>
<div style="left:1160px;top:154px;width:126px;height:16px;box-sizing:border-box;background:#fff;border:1px solid #b9b9b9;"></div><span style="top:155.15px;font-size:11px;line-height:14px;color:#111;left:1161.00px;transform-origin:0 50%;">ups</span>
<svg style="left:1291px;top:143px" width="15" height="15" viewBox="0 0 15 15"><path d="M1 14 L2 10.300 L10.500 1.800 L13.200 4.500 L4.700 13 Z" fill="#4a4a4a"/><path d="M11.300 1 L12 0.400 C12.500 0 13.200 0 13.700 0.500 L14.500 1.300 C15 1.800 15 2.500 14.600 3 L14 3.700 Z" fill="#4a4a4a"/><path d="M1 14 L1.500 12 L3 13.500 Z" fill="#222"/></svg>
<div style="left:983px;top:178px;width:174px;height:27px;box-sizing:border-box;background:#f6f6f6;border-bottom:1px solid #e9e9e9;border-right:1px solid #e9e9e9;"></div><span style="top:183.00px;font-size:13px;line-height:17px;color:#666;font-weight:bold;right:770.00px;transform-origin:100% 50%;word-spacing:.4px;">Price</span>
<div style="left:1160px;top:184px;width:126px;height:16px;box-sizing:border-box;background:#fff;border:1px solid #b9b9b9;"></div><span style="top:185.15px;font-size:11px;line-height:14px;color:#111;left:1161.00px;transform-origin:0 50%;">0.00000</span>
<div style="left:1291px;top:184px;width:60px;height:16px;box-sizing:border-box;background:#fff;border:1px solid #b0b0b0;"></div><span style="top:185.15px;font-size:11px;line-height:14px;color:#111;left:1296.00px;transform-origin:0 50%;">$ USD</span><svg style="left:1337px;top:189.0px" width="8" height="6" viewBox="0 0 8 6"><path d="M0.500 0.500 H7.500 L4 5.800 Z" fill="#111"/></svg>
<div style="left:983px;top:208px;width:174px;height:27px;box-sizing:border-box;background:#f6f6f6;border-bottom:1px solid #e9e9e9;border-right:1px solid #e9e9e9;"></div><span style="top:213.00px;font-size:13px;line-height:17px;color:#666;font-weight:bold;right:770.00px;transform-origin:100% 50%;word-spacing:.4px;">Percentage</span>
<div style="left:1160px;top:214px;width:126px;height:16px;box-sizing:border-box;background:#fff;border:1px solid #b9b9b9;"></div><span style="top:215.15px;font-size:11px;line-height:14px;color:#111;left:1161.00px;transform-origin:0 50%;">0</span>
<span style="top:214.69px;font-size:11px;line-height:14px;color:#222;left:1291.50px;transform-origin:0 50%;">%</span>
<div style="left:983px;top:238px;width:174px;height:27px;box-sizing:border-box;background:#f6f6f6;border-bottom:1px solid #e9e9e9;border-right:1px solid #e9e9e9;"></div><span style="top:243.00px;font-size:13px;line-height:17px;color:#666;font-weight:bold;right:770.00px;transform-origin:100% 50%;word-spacing:.4px;">Product tax category</span>
<div style="left:1160px;top:244px;width:125px;height:16px;box-sizing:border-box;background:#fff;border:1px solid #b0b0b0;"></div><span style="top:245.15px;font-size:11px;line-height:14px;color:#111;left:1165.00px;transform-origin:0 50%;">None</span><svg style="left:1271px;top:249.0px" width="8" height="6" viewBox="0 0 8 6"><path d="M0.500 0.500 H7.500 L4 5.800 Z" fill="#111"/></svg>
<div style="left:983px;top:268px;width:174px;height:25px;box-sizing:border-box;background:#f6f6f6;border-bottom:1px solid #e9e9e9;border-right:1px solid #e9e9e9;"></div><span style="top:271.00px;font-size:13px;line-height:17px;color:#666;font-weight:bold;right:770.00px;transform-origin:100% 50%;word-spacing:.4px;">Use price per product</span>
<div style="left:1160px;top:274px;width:10px;height:10px;border:1px solid #ababab;border-radius:50%;background:linear-gradient(#ececec,#dcdcdc);"><i style="position:absolute;left:2.500px;top:2.500px;width:5px;height:5px;border-radius:50%;background:#555"></i></div>
<span style="top:273.70px;font-size:13px;line-height:17px;color:#222;left:1181.50px;transform-origin:0 50%;">No</span>
<div style="left:1206px;top:274px;width:10px;height:10px;border:1px solid #ababab;border-radius:50%;background:linear-gradient(#ececec,#dcdcdc);"></div>
<span style="top:273.70px;font-size:13px;line-height:17px;color:#222;left:1228.00px;transform-origin:0 50%;">Yes</span>
<div style="left:983px;top:295px;width:174px;height:28px;box-sizing:border-box;background:#f6f6f6;border-bottom:1px solid #e9e9e9;border-right:1px solid #e9e9e9;"></div><span style="top:300.00px;font-size:13px;line-height:17px;color:#666;font-weight:bold;right:770.00px;transform-origin:100% 50%;word-spacing:.4px;">Override shipping address</span>
<div style="left:1160px;top:301px;width:119px;height:16px;box-sizing:border-box;background:#fff;border:1px solid #b0b0b0;"></div><span style="top:302.15px;font-size:11px;line-height:14px;color:#111;left:1165.00px;transform-origin:0 50%;">No</span><svg style="left:1265px;top:306.0px" width="8" height="6" viewBox="0 0 8 6"><path d="M0.500 0.500 H7.500 L4 5.800 Z" fill="#111"/></svg>
<div style="left:963px;top:360px;width:894px;height:247px;box-sizing:border-box;background:#fff;border:1px solid #ccc;"></div><div style="left:982px;top:360px;width:144.5px;height:1px;background:#fff;"></div><span style="top:352.18px;font-size:13px;line-height:17px;color:#146295;font-weight:bold;left:985.00px;transform-origin:0 50%;">Specific configuration</span>
<div style="left:983px;top:375px;width:143px;height:28px;box-sizing:border-box;background:#f6f6f6;border-bottom:1px solid #e9e9e9;border-right:1px solid #e9e9e9;"></div><span style="top:380.00px;font-size:13px;line-height:17px;color:#666;font-weight:bold;right:801.00px;transform-origin:100% 50%;word-spacing:.4px;">Product tax category</span>
<div style="left:983px;top:405px;width:143px;height:28px;box-sizing:border-box;background:#f6f6f6;border-bottom:1px solid #e9e9e9;border-right:1px solid #e9e9e9;"></div><span style="top:410.00px;font-size:13px;line-height:17px;color:#666;font-weight:bold;right:801.00px;transform-origin:100% 50%;word-spacing:.4px;">UPS Access Key</span>
<div style="left:983px;top:435px;width:143px;height:28px;box-sizing:border-box;background:#f6f6f6;border-bottom:1px solid #e9e9e9;border-right:1px solid #e9e9e9;"></div><span style="top:440.00px;font-size:13px;line-height:17px;color:#666;font-weight:bold;right:801.00px;transform-origin:100% 50%;word-spacing:.4px;">UPS User ID</span>
<div style="left:983px;top:465px;width:143px;height:28px;box-sizing:border-box;background:#f6f6f6;border-bottom:1px solid #e9e9e9;border-right:1px solid #e9e9e9;"></div><span style="top:470.00px;font-size:13px;line-height:17px;color:#666;font-weight:bold;right:801.00px;transform-origin:100% 50%;word-spacing:.4px;">Password</span>
<div style="left:983px;top:495px;width:143px;height:28px;box-sizing:border-box;background:#f6f6f6;border-bottom:1px solid #e9e9e9;border-right:1px solid #e9e9e9;"></div><span style="top:500.00px;font-size:13px;line-height:17px;color:#666;font-weight:bold;right:801.00px;transform-origin:100% 50%;word-spacing:.4px;">Shipper number</span>
<div style="left:983px;top:525px;width:143px;height:28px;box-sizing:border-box;background:#f6f6f6;border-bottom:1px solid #e9e9e9;border-right:1px solid #e9e9e9;"></div><span style="top:530.00px;font-size:13px;line-height:17px;color:#666;font-weight:bold;right:801.00px;transform-origin:100% 50%;word-spacing:.4px;">Pickup type</span>
<div style="left:983px;top:555px;width:143px;height:28px;box-sizing:border-box;background:#f6f6f6;border-bottom:1px solid #e9e9e9;border-right:1px solid #e9e9e9;"></div><span style="top:560.00px;font-size:13px;line-height:17px;color:#666;font-weight:bold;right:801.00px;transform-origin:100% 50%;word-spacing:.4px;">Destination type</span>
<div style="left:1129px;top:381px;width:125px;height:16px;box-sizing:border-box;background:#fff;border:1px solid #b0b0b0;"></div><span style="top:382.15px;font-size:11px;line-height:14px;color:#111;left:1134.00px;transform-origin:0 50%;">None</span><svg style="left:1240px;top:386.0px" width="8" height="6" viewBox="0 0 8 6"><path d="M0.500 0.500 H7.500 L4 5.800 Z" fill="#111"/></svg>
<div style="left:1129px;top:411px;width:126px;height:16px;box-sizing:border-box;background:#fff;border:1px solid #b9b9b9;overflow:hidden;"><i style="position:absolute;left:1px;top:0;width:112px;height:14px;background:linear-gradient(90deg,#dadada,#c6c6c6 22%,#d6d6d6 42%,#c4c4c4 70%,#d2d2d2 88%,#f0f0f0);filter:blur(1.800px);"></i></div>
<div style="left:1129px;top:441px;width:126px;height:16px;box-sizing:border-box;background:#fff;border:1px solid #b9b9b9;overflow:hidden;"><i style="position:absolute;left:-2px;top:0;width:68px;height:14px;background:linear-gradient(90deg,#dadada,#c6c6c6 22%,#d6d6d6 42%,#c4c4c4 70%,#d2d2d2 88%,#f0f0f0);filter:blur(1.800px);"></i></div>
<div style="left:1129px;top:471px;width:126px;height:16px;box-sizing:border-box;background:#fff;border:1px solid #b9b9b9;overflow:hidden;"><i style="position:absolute;left:1px;top:0;width:52px;height:14px;background:linear-gradient(90deg,#dadada,#c6c6c6 22%,#d6d6d6 42%,#c4c4c4 70%,#d2d2d2 88%,#f0f0f0);filter:blur(1.800px);"></i></div>
<div style="left:1129px;top:501px;width:126px;height:16px;box-sizing:border-box;background:#fff;border:1px solid #b9b9b9;overflow:hidden;"><i style="position:absolute;left:-2px;top:0;width:47px;height:14px;background:linear-gradient(90deg,#dadada,#c6c6c6 22%,#d6d6d6 42%,#c4c4c4 70%,#d2d2d2 88%,#f0f0f0);filter:blur(1.800px);"></i></div>
<div style="left:1129px;top:531px;width:118px;height:16px;box-sizing:border-box;background:#fff;border:1px solid #b0b0b0;"></div><span style="top:532.15px;font-size:11px;line-height:14px;color:#111;left:1134.00px;transform-origin:0 50%;">Daily Pickup</span><svg style="left:1233px;top:536.0px" width="8" height="6" viewBox="0 0 8 6"><path d="M0.500 0.500 H7.500 L4 5.800 Z" fill="#111"/></svg>
<div style="left:1129px;top:561px;width:130px;height:16px;box-sizing:border-box;background:#fff;border:1px solid #b0b0b0;"></div><span style="top:562.15px;font-size:11px;line-height:14px;color:#111;left:1134.00px;transform-origin:0 50%;">Residential Address</span><svg style="left:1245px;top:566.0px" width="8" height="6" viewBox="0 0 8 6"><path d="M0.500 0.500 H7.500 L4 5.800 Z" fill="#111"/></svg>
<div style="left:955px;top:624px;width:910px;height:126px;box-sizing:border-box;background:#fff;border:1px solid #ccc;"></div><div style="left:960px;top:624px;width:77.59375px;height:1px;background:#fff;"></div><span style="top:616.18px;font-size:13px;line-height:17px;color:#146295;font-weight:bold;left:963.00px;transform-origin:0 50%;">Warehouse</span>
<div style="left:1798px;top:642px;width:56px;height:29px;box-sizing:border-box;background:#fff;border:1px solid #ccc;"></div>
<svg style="left:1805px;top:649px" width="13" height="13" viewBox="0 0 13 13"><path d="M6.500 0.500 V12.500 M0.500 6.500 H12.500" stroke="#3c3c3c" stroke-width="3.400"/></svg>
<span style="top:653.00px;font-size:13px;line-height:17px;color:#222;left:1823.50px;transform-origin:0 50%;">Add</span>
<div style="left:962px;top:680.5px;width:96.5px;height:21px;box-sizing:border-box;background:#f6f6f6;border-bottom:2px solid #e3e3e3;"></div>
<span style="top:684.19px;font-size:11px;line-height:14px;color:#666;font-weight:bold;left:710.25px;width:600px;text-align:center;transform-origin:50% 50%;">Name</span>
<div style="left:962px;top:701.5px;width:96.5px;height:42.5px;box-sizing:border-box;border-bottom:1px solid #efefef;border-right:1px solid #f1f1f1;border-left:1px solid #f1f1f1;"></div>
<div style="left:1060.5px;top:680.5px;width:96.0px;height:21px;box-sizing:border-box;background:#f6f6f6;border-bottom:2px solid #e3e3e3;"></div>
<span style="top:684.19px;font-size:11px;line-height:14px;color:#666;font-weight:bold;left:808.50px;width:600px;text-align:center;transform-origin:50% 50%;">Zip Code</span>
<div style="left:1060.5px;top:701.5px;width:96.0px;height:42.5px;box-sizing:border-box;border-bottom:1px solid #efefef;border-right:1px solid #f1f1f1;"></div>
<div style="left:1158.5px;top:680.5px;width:96.0px;height:21px;box-sizing:border-box;background:#f6f6f6;border-bottom:2px solid #e3e3e3;"></div>
<span style="top:684.19px;font-size:11px;line-height:14px;color:#666;font-weight:bold;left:906.50px;width:600px;text-align:center;transform-origin:50% 50%;">City</span>
<div style="left:1158.5px;top:701.5px;width:96.0px;height:42.5px;box-sizing:border-box;border-bottom:1px solid #efefef;border-right:1px solid #f1f1f1;"></div>
<div style="left:1256.5px;top:680.5px;width:123.0px;height:21px;box-sizing:border-box;background:#f6f6f6;border-bottom:2px solid #e3e3e3;"></div>
<span style="top:684.19px;font-size:11px;line-height:14px;color:#666;font-weight:bold;left:1018.00px;width:600px;text-align:center;transform-origin:50% 50%;">Country</span>
<div style="left:1256.5px;top:701.5px;width:123.0px;height:42.5px;box-sizing:border-box;border-bottom:1px solid #efefef;border-right:1px solid #f1f1f1;"></div>
<div style="left:1381.5px;top:680.5px;width:188.5px;height:21px;box-sizing:border-box;background:#f6f6f6;border-bottom:2px solid #e3e3e3;"></div>
<span style="top:684.19px;font-size:11px;line-height:14px;color:#666;font-weight:bold;left:1175.75px;width:600px;text-align:center;transform-origin:50% 50%;">Zone</span>
<div style="left:1381.5px;top:701.5px;width:188.5px;height:42.5px;box-sizing:border-box;border-bottom:1px solid #efefef;border-right:1px solid #f1f1f1;"></div>
<div style="left:1572px;top:680.5px;width:74px;height:21px;box-sizing:border-box;background:#f6f6f6;border-bottom:2px solid #e3e3e3;"></div>
<span style="top:684.19px;font-size:11px;line-height:14px;color:#666;font-weight:bold;left:1309.00px;width:600px;text-align:center;transform-origin:50% 50%;">Delete Zone</span>
<div style="left:1572px;top:701.5px;width:74px;height:42.5px;box-sizing:border-box;border-bottom:1px solid #efefef;border-right:1px solid #f1f1f1;"></div>
<div style="left:1648px;top:680.5px;width:82px;height:21px;box-sizing:border-box;background:#f6f6f6;border-bottom:2px solid #e3e3e3;"></div>
<span style="top:684.19px;font-size:11px;line-height:14px;color:#666;font-weight:bold;left:1389.00px;width:600px;text-align:center;transform-origin:50% 50%;">Units</span>
<div style="left:1648px;top:701.5px;width:82px;height:42.5px;box-sizing:border-box;border-bottom:1px solid #efefef;border-right:1px solid #f1f1f1;"></div>
<div style="left:1732px;top:680.5px;width:79px;height:21px;box-sizing:border-box;background:#f6f6f6;border-bottom:2px solid #e3e3e3;"></div>
<span style="top:684.19px;font-size:11px;line-height:14px;color:#666;font-weight:bold;left:1471.50px;width:600px;text-align:center;transform-origin:50% 50%;">Currency</span>
<div style="left:1732px;top:701.5px;width:79px;height:42.5px;box-sizing:border-box;border-bottom:1px solid #efefef;border-right:1px solid #f1f1f1;"></div>
<div style="left:1813px;top:680.5px;width:46px;height:21px;box-sizing:border-box;background:#f6f6f6;border-bottom:2px solid #e3e3e3;"></div>
<span style="top:684.19px;font-size:11px;line-height:14px;color:#666;font-weight:bold;left:1536.00px;width:600px;text-align:center;transform-origin:50% 50%;">Delete</span>
<div style="left:1813px;top:701.5px;width:46px;height:42.5px;box-sizing:border-box;border-bottom:1px solid #efefef;border-right:1px solid #f1f1f1;"></div>
<div style="left:971px;top:715px;width:74px;height:15px;box-sizing:border-box;background:#fff;border:1px solid #b9b9b9;"></div><span style="top:716.14px;font-size:10px;line-height:13px;color:#222;left:971.70px;transform-origin:0 50%;">Vancouver</span>
<div style="left:1069px;top:715px;width:74px;height:15px;box-sizing:border-box;background:#fff;border:1px solid #b9b9b9;"></div><span style="top:716.14px;font-size:10px;line-height:13px;color:#222;left:1069.70px;transform-origin:0 50%;">98661</span>
<div style="left:1167px;top:715px;width:74px;height:15px;box-sizing:border-box;background:#fff;border:1px solid #b9b9b9;"></div><span style="top:716.14px;font-size:10px;line-height:13px;color:#222;left:1167.70px;transform-origin:0 50%;">Vancouver</span>
<div style="left:1265px;top:715px;width:100px;height:15px;box-sizing:border-box;background:#fff;border:1px solid #b0b0b0;"></div><span style="top:716.14px;font-size:10px;line-height:13px;color:#111;left:1270.00px;transform-origin:0 50%;">United States of</span><svg style="left:1351px;top:719.5px" width="8" height="6" viewBox="0 0 8 6"><path d="M0.500 0.500 H7.500 L4 5.800 Z" fill="#111"/></svg>
<span style="top:725.19px;font-size:11px;line-height:14px;color:#555;left:1395.00px;transform-origin:0 50%;">223 United States of America</span>
<svg style="left:1541px;top:713px" width="15" height="15" viewBox="0 0 15 15"><path d="M1 14 L2 10.300 L10.500 1.800 L13.200 4.500 L4.700 13 Z" fill="#4a4a4a"/><path d="M11.300 1 L12 0.400 C12.500 0 13.200 0 13.700 0.500 L14.500 1.300 C15 1.800 15 2.500 14.600 3 L14 3.700 Z" fill="#4a4a4a"/><path d="M1 14 L1.500 12 L3 13.500 Z" fill="#222"/></svg>
<svg style="left:1602px;top:712.5px" width="12" height="16" viewBox="0 0 12 16"><path d="M4 1.800 V0.600 H8 V1.800" fill="none" stroke="#4a4a4a" stroke-width="1.200"/><rect x="0.300" y="1.800" width="11.400" height="2.200" fill="#4a4a4a"/><path d="M1.200 5 H10.800 V15.300 H1.200 Z" fill="#4a4a4a"/><path d="M3.600 6 V14 M6 6 V14 M8.400 6 V14" stroke="#f4f4f4" stroke-width="1"/></svg>
<div style="left:1656px;top:715px;width:60px;height:15px;box-sizing:border-box;background:#fff;border:1px solid #b0b0b0;"></div><span style="top:716.14px;font-size:10px;line-height:13px;color:#111;left:1661.00px;transform-origin:0 50%;">LB/IN</span><svg style="left:1702px;top:719.5px" width="8" height="6" viewBox="0 0 8 6"><path d="M0.500 0.500 H7.500 L4 5.800 Z" fill="#111"/></svg>
<div style="left:1740px;top:715px;width:57px;height:15px;box-sizing:border-box;background:#fff;border:1px solid #b0b0b0;"></div><span style="top:716.14px;font-size:10px;line-height:13px;color:#111;left:1745.00px;transform-origin:0 50%;">$ USD</span><svg style="left:1783px;top:719.5px" width="8" height="6" viewBox="0 0 8 6"><path d="M0.500 0.500 H7.500 L4 5.800 Z" fill="#111"/></svg>
<svg style="left:1828.5px;top:712.5px" width="12" height="16" viewBox="0 0 12 16"><path d="M4 1.800 V0.600 H8 V1.800" fill="none" stroke="#4a4a4a" stroke-width="1.200"/><rect x="0.300" y="1.800" width="11.400" height="2.200" fill="#4a4a4a"/><path d="M1.200 5 H10.800 V15.300 H1.200 Z" fill="#4a4a4a"/><path d="M3.600 6 V14 M6 6 V14 M8.400 6 V14" stroke="#f4f4f4" stroke-width="1"/></svg>
<div style="left:955px;top:760px;width:910px;height:890px;box-sizing:border-box;background:#fff;border:1px solid #ccc;"></div>
<div style="left:963px;top:768px;width:164px;height:706px;box-sizing:border-box;background:#f6f6f6;border-bottom:1px solid #e9e9e9;border-right:1px solid #e9e9e9;"></div><span style="top:1111.50px;font-size:13px;line-height:17px;color:#666;font-weight:bold;right:795.50px;transform-origin:100% 50%;word-spacing:.4px;">Shipping services</span>
<span style="top:767.84px;font-size:12px;line-height:16px;color:#222;left:1130.50px;transform-origin:0 50%;">Select all / Unselect all</span>
<div style="left:1130px;top:787.8px;width:10px;height:10px;border:1px solid #a8a8a8;border-radius:2.500px;background:linear-gradient(#ececec,#dadada);box-shadow:inset 0 1px 0 #f6f6f6;"></div>
<span style="top:787.70px;font-size:13px;line-height:17px;color:#1a1a1a;left:1148.30px;transform-origin:0 50%;transform:scaleX(1.0030);word-spacing:.4px;">UPS Next Day Air (USA, PUERTO RICO)</span>
<div style="left:1130px;top:810.8px;width:10px;height:10px;border:1px solid #a8a8a8;border-radius:2.500px;background:linear-gradient(#ececec,#dadada);box-shadow:inset 0 1px 0 #f6f6f6;"></div>
<span style="top:810.70px;font-size:13px;line-height:17px;color:#1a1a1a;left:1148.30px;transform-origin:0 50%;transform:scaleX(1.0030);word-spacing:.4px;">UPS Second Day Air (USA, PUERTO RICO)</span>
<div style="left:1130px;top:833.8px;width:10px;height:10px;border:1px solid #a8a8a8;border-radius:2.500px;background:linear-gradient(#ececec,#dadada);box-shadow:inset 0 1px 0 #f6f6f6;"><svg style="left:0.500px;top:-1px" width="11" height="11" viewBox="0 0 11 11"><path d="M2 5.500 L4.500 8.500 L9.500 1.500" fill="none" stroke="#333" stroke-width="2"/></svg></div>
<span style="top:833.70px;font-size:13px;line-height:17px;color:#1a1a1a;left:1148.30px;transform-origin:0 50%;transform:scaleX(1.0030);word-spacing:.4px;">UPS Ground (USA, PUERTO RICO)</span>
<div style="left:1130px;top:856.8px;width:10px;height:10px;border:1px solid #a8a8a8;border-radius:2.500px;background:linear-gradient(#ececec,#dadada);box-shadow:inset 0 1px 0 #f6f6f6;"></div>
<span style="top:856.70px;font-size:13px;line-height:17px;color:#1a1a1a;left:1148.30px;transform-origin:0 50%;transform:scaleX(1.0030);word-spacing:.4px;">UPS Worldwide Express (USA, PUERTO RICO, CANADA)</span>
<div style="left:1130px;top:879.8px;width:10px;height:10px;border:1px solid #a8a8a8;border-radius:2.500px;background:linear-gradient(#ececec,#dadada);box-shadow:inset 0 1px 0 #f6f6f6;"></div>
<span style="top:879.70px;font-size:13px;line-height:17px;color:#1a1a1a;left:1148.30px;transform-origin:0 50%;transform:scaleX(1.0030);word-spacing:.4px;">UPS Worldwide Expedited (USA, PUERTO RICO, CANADA)</span>
<div style="left:1130px;top:902.8px;width:10px;height:10px;border:1px solid #a8a8a8;border-radius:2.500px;background:linear-gradient(#ececec,#dadada);box-shadow:inset 0 1px 0 #f6f6f6;"></div>
<span style="top:902.70px;font-size:13px;line-height:17px;color:#1a1a1a;left:1148.30px;transform-origin:0 50%;transform:scaleX(1.0030);word-spacing:.4px;">UPS Standard (USA, CANADA, POLAND, EUROPEAN UNION, OTHER)</span>
<div style="left:1130px;top:925.8px;width:10px;height:10px;border:1px solid #a8a8a8;border-radius:2.500px;background:linear-gradient(#ececec,#dadada);box-shadow:inset 0 1px 0 #f6f6f6;"></div>
<span style="top:925.70px;font-size:13px;line-height:17px;color:#1a1a1a;left:1148.30px;transform-origin:0 50%;transform:scaleX(1.0030);word-spacing:.4px;">UPS Three-Day Select (USA, CANADA)</span>
<div style="left:1130px;top:948.8px;width:10px;height:10px;border:1px solid #a8a8a8;border-radius:2.500px;background:linear-gradient(#ececec,#dadada);box-shadow:inset 0 1px 0 #f6f6f6;"></div>
<span style="top:948.70px;font-size:13px;line-height:17px;color:#1a1a1a;left:1148.30px;transform-origin:0 50%;transform:scaleX(1.0030);word-spacing:.4px;">UPS Next Day Air Saver (USA)</span>
<div style="left:1130px;top:971.8px;width:10px;height:10px;border:1px solid #a8a8a8;border-radius:2.500px;background:linear-gradient(#ececec,#dadada);box-shadow:inset 0 1px 0 #f6f6f6;"></div>
<span style="top:971.70px;font-size:13px;line-height:17px;color:#1a1a1a;left:1148.30px;transform-origin:0 50%;transform:scaleX(1.0030);word-spacing:.4px;">UPS Next Day Air Early A.M. (USA, PUERTO RICO)</span>
<div style="left:1130px;top:994.8px;width:10px;height:10px;border:1px solid #a8a8a8;border-radius:2.500px;background:linear-gradient(#ececec,#dadada);box-shadow:inset 0 1px 0 #f6f6f6;"></div>
<span style="top:994.70px;font-size:13px;line-height:17px;color:#1a1a1a;left:1148.30px;transform-origin:0 50%;transform:scaleX(1.0030);word-spacing:.4px;">UPS Worldwide Express Plus (USA, CANADA, POLAND, EUROPEAN UNION, OTHER, PUERTO RICO)</span>
<div style="left:1130px;top:1017.8px;width:10px;height:10px;border:1px solid #a8a8a8;border-radius:2.500px;background:linear-gradient(#ececec,#dadada);box-shadow:inset 0 1px 0 #f6f6f6;"></div>
<span style="top:1017.70px;font-size:13px;line-height:17px;color:#1a1a1a;left:1148.30px;transform-origin:0 50%;transform:scaleX(1.0030);word-spacing:.4px;">UPS Second Day Air A.M. (USA)</span>
<div style="left:1130px;top:1040.8px;width:10px;height:10px;border:1px solid #a8a8a8;border-radius:2.500px;background:linear-gradient(#ececec,#dadada);box-shadow:inset 0 1px 0 #f6f6f6;"></div>
<span style="top:1040.70px;font-size:13px;line-height:17px;color:#1a1a1a;left:1148.30px;transform-origin:0 50%;transform:scaleX(1.0030);word-spacing:.4px;">UPS Saver (USA, PUERTO RICO, CANADA, MEXICO, POLAND, EUROPEAN UNION, OTHER)</span>
<div style="left:1130px;top:1063.8px;width:10px;height:10px;border:1px solid #a8a8a8;border-radius:2.500px;background:linear-gradient(#ececec,#dadada);box-shadow:inset 0 1px 0 #f6f6f6;"></div>
<span style="top:1063.70px;font-size:13px;line-height:17px;color:#1a1a1a;left:1148.30px;transform-origin:0 50%;transform:scaleX(1.0030);word-spacing:.4px;">UPS Express CA (CANADA)</span>
<div style="left:1130px;top:1086.8px;width:10px;height:10px;border:1px solid #a8a8a8;border-radius:2.500px;background:linear-gradient(#ececec,#dadada);box-shadow:inset 0 1px 0 #f6f6f6;"></div>
<span style="top:1086.70px;font-size:13px;line-height:17px;color:#1a1a1a;left:1148.30px;transform-origin:0 50%;transform:scaleX(1.0030);word-spacing:.4px;">UPS Expedited CA (CANADA)</span>
<div style="left:1130px;top:1109.8px;width:10px;height:10px;border:1px solid #a8a8a8;border-radius:2.500px;background:linear-gradient(#ececec,#dadada);box-shadow:inset 0 1px 0 #f6f6f6;"></div>
<span style="top:1109.70px;font-size:13px;line-height:17px;color:#1a1a1a;left:1148.30px;transform-origin:0 50%;transform:scaleX(1.0030);word-spacing:.4px;">UPS Saver CA (CANADA)</span>
<div style="left:1130px;top:1132.8px;width:10px;height:10px;border:1px solid #a8a8a8;border-radius:2.500px;background:linear-gradient(#ececec,#dadada);box-shadow:inset 0 1px 0 #f6f6f6;"></div>
<span style="top:1132.70px;font-size:13px;line-height:17px;color:#1a1a1a;left:1148.30px;transform-origin:0 50%;transform:scaleX(1.0030);word-spacing:.4px;">UPS Express Early A.M (CANADA)</span>
<div style="left:1130px;top:1155.8px;width:10px;height:10px;border:1px solid #a8a8a8;border-radius:2.500px;background:linear-gradient(#ececec,#dadada);box-shadow:inset 0 1px 0 #f6f6f6;"></div>
<span style="top:1155.70px;font-size:13px;line-height:17px;color:#1a1a1a;left:1148.30px;transform-origin:0 50%;transform:scaleX(1.0030);word-spacing:.4px;">UPS Express (MEXICO, POLAND, EUROPEAN UNION, OTHER)</span>
<div style="left:1130px;top:1178.8px;width:10px;height:10px;border:1px solid #a8a8a8;border-radius:2.500px;background:linear-gradient(#ececec,#dadada);box-shadow:inset 0 1px 0 #f6f6f6;"></div>
<span style="top:1178.70px;font-size:13px;line-height:17px;color:#1a1a1a;left:1148.30px;transform-origin:0 50%;transform:scaleX(1.0030);word-spacing:.4px;">UPS Expedited (MEXICO, POLAND, EUROPEAN UNION, OTHER)</span>
<div style="left:1130px;top:1201.8px;width:10px;height:10px;border:1px solid #a8a8a8;border-radius:2.500px;background:linear-gradient(#ececec,#dadada);box-shadow:inset 0 1px 0 #f6f6f6;"></div>
<span style="top:1201.70px;font-size:13px;line-height:17px;color:#1a1a1a;left:1148.30px;transform-origin:0 50%;transform:scaleX(1.0030);word-spacing:.4px;">UPS Express Plus (MEXICO)</span>
<div style="left:1130px;top:1224.8px;width:10px;height:10px;border:1px solid #a8a8a8;border-radius:2.500px;background:linear-gradient(#ececec,#dadada);box-shadow:inset 0 1px 0 #f6f6f6;"></div>
<span style="top:1224.70px;font-size:13px;line-height:17px;color:#1a1a1a;left:1148.30px;transform-origin:0 50%;transform:scaleX(1.0030);word-spacing:.4px;">UPS Today Standard (POLAND)</span>
<div style="left:1130px;top:1247.8px;width:10px;height:10px;border:1px solid #a8a8a8;border-radius:2.500px;background:linear-gradient(#ececec,#dadada);box-shadow:inset 0 1px 0 #f6f6f6;"></div>
<span style="top:1247.70px;font-size:13px;line-height:17px;color:#1a1a1a;left:1148.30px;transform-origin:0 50%;transform:scaleX(1.0030);word-spacing:.4px;">UPS Today Dedicated Courrier (POLAND)</span>
<div style="left:1130px;top:1270.8px;width:10px;height:10px;border:1px solid #a8a8a8;border-radius:2.500px;background:linear-gradient(#ececec,#dadada);box-shadow:inset 0 1px 0 #f6f6f6;"></div>
<span style="top:1270.70px;font-size:13px;line-height:17px;color:#1a1a1a;left:1148.30px;transform-origin:0 50%;transform:scaleX(1.0030);word-spacing:.4px;">UPS Today Intercity (POLAND)</span>
<div style="left:1130px;top:1293.8px;width:10px;height:10px;border:1px solid #a8a8a8;border-radius:2.500px;background:linear-gradient(#ececec,#dadada);box-shadow:inset 0 1px 0 #f6f6f6;"></div>
<span style="top:1293.70px;font-size:13px;line-height:17px;color:#1a1a1a;left:1148.30px;transform-origin:0 50%;transform:scaleX(1.0030);word-spacing:.4px;">UPS Today Express (POLAND)</span>
<div style="left:1130px;top:1316.8px;width:10px;height:10px;border:1px solid #a8a8a8;border-radius:2.500px;background:linear-gradient(#ececec,#dadada);box-shadow:inset 0 1px 0 #f6f6f6;"></div>
<span style="top:1316.70px;font-size:13px;line-height:17px;color:#1a1a1a;left:1148.30px;transform-origin:0 50%;transform:scaleX(1.0030);word-spacing:.4px;">UPS Today Express Saver (POLAND)</span>
<div style="left:1130px;top:1339.8px;width:10px;height:10px;border:1px solid #a8a8a8;border-radius:2.500px;background:linear-gradient(#ececec,#dadada);box-shadow:inset 0 1px 0 #f6f6f6;"></div>
<span style="top:1339.70px;font-size:13px;line-height:17px;color:#1a1a1a;left:1148.30px;transform-origin:0 50%;transform:scaleX(1.0030);word-spacing:.4px;">Trade Direct Cross Border (ALL)</span>
<div style="left:1130px;top:1362.8px;width:10px;height:10px;border:1px solid #a8a8a8;border-radius:2.500px;background:linear-gradient(#ececec,#dadada);box-shadow:inset 0 1px 0 #f6f6f6;"></div>
<span style="top:1362.70px;font-size:13px;line-height:17px;color:#1a1a1a;left:1148.30px;transform-origin:0 50%;transform:scaleX(1.0030);word-spacing:.4px;">Trade Direct Air (ALL)</span>
<div style="left:1130px;top:1385.8px;width:10px;height:10px;border:1px solid #a8a8a8;border-radius:2.500px;background:linear-gradient(#ececec,#dadada);box-shadow:inset 0 1px 0 #f6f6f6;"></div>
<span style="top:1385.70px;font-size:13px;line-height:17px;color:#1a1a1a;left:1148.30px;transform-origin:0 50%;transform:scaleX(1.0030);word-spacing:.4px;">Trade Direct Ocean (ALL)</span>
<div style="left:1130px;top:1408.8px;width:10px;height:10px;border:1px solid #a8a8a8;border-radius:2.500px;background:linear-gradient(#ececec,#dadada);box-shadow:inset 0 1px 0 #f6f6f6;"></div>
<span style="top:1408.70px;font-size:13px;line-height:17px;color:#1a1a1a;left:1148.30px;transform-origin:0 50%;transform:scaleX(1.0030);word-spacing:.4px;">UPS Freight LTL (ALL)</span>
<div style="left:1130px;top:1431.8px;width:10px;height:10px;border:1px solid #a8a8a8;border-radius:2.500px;background:linear-gradient(#ececec,#dadada);box-shadow:inset 0 1px 0 #f6f6f6;"></div>
<span style="top:1431.70px;font-size:13px;line-height:17px;color:#1a1a1a;left:1148.30px;transform-origin:0 50%;transform:scaleX(1.0030);word-spacing:.4px;">UPS Freight LTL Guaranteed (ALL)</span>
<div style="left:1130px;top:1454.8px;width:10px;height:10px;border:1px solid #a8a8a8;border-radius:2.500px;background:linear-gradient(#ececec,#dadada);box-shadow:inset 0 1px 0 #f6f6f6;"></div>
<span style="top:1454.70px;font-size:13px;line-height:17px;color:#1a1a1a;left:1148.30px;transform-origin:0 50%;transform:scaleX(1.0030);word-spacing:.4px;">UPS Freight LTL Urgent (ALL)</span>
<div style="left:963px;top:1476px;width:164px;height:25px;box-sizing:border-box;background:#f6f6f6;border-bottom:1px solid #e9e9e9;border-right:1px solid #e9e9e9;"></div><span style="top:1479.00px;font-size:13px;line-height:17px;color:#666;font-weight:bold;right:795.50px;transform-origin:100% 50%;word-spacing:.4px;">Negotiated rate</span>
<div style="left:1130px;top:1482px;width:10px;height:10px;border:1px solid #ababab;border-radius:50%;background:linear-gradient(#ececec,#dcdcdc);"><i style="position:absolute;left:2.500px;top:2.500px;width:5px;height:5px;border-radius:50%;background:#555"></i></div>
<span style="top:1482.00px;font-size:13px;line-height:17px;color:#222;left:1151.50px;transform-origin:0 50%;">No</span>
<div style="left:1171px;top:1482px;width:10px;height:10px;border:1px solid #ababab;border-radius:50%;background:linear-gradient(#ececec,#dcdcdc);"></div>
<span style="top:1482.00px;font-size:13px;line-height:17px;color:#222;left:1193.30px;transform-origin:0 50%;">Yes</span>
<div style="left:963px;top:1503px;width:164px;height:25px;box-sizing:border-box;background:#f6f6f6;border-bottom:1px solid #e9e9e9;border-right:1px solid #e9e9e9;"></div><span style="top:1506.00px;font-size:13px;line-height:17px;color:#666;font-weight:bold;right:795.50px;transform-origin:100% 50%;word-spacing:.4px;">Group packages</span>
<div style="left:1130px;top:1509px;width:10px;height:10px;border:1px solid #ababab;border-radius:50%;background:linear-gradient(#ececec,#dcdcdc);"></div>
<span style="top:1509.00px;font-size:13px;line-height:17px;color:#222;left:1151.50px;transform-origin:0 50%;">No</span>
<div style="left:1171px;top:1509px;width:10px;height:10px;border:1px solid #ababab;border-radius:50%;background:linear-gradient(#ececec,#dcdcdc);"><i style="position:absolute;left:2.500px;top:2.500px;width:5px;height:5px;border-radius:50%;background:#555"></i></div>
<span style="top:1509.00px;font-size:13px;line-height:17px;color:#222;left:1193.30px;transform-origin:0 50%;">Yes</span>
<div style="left:963px;top:1530px;width:164px;height:25px;box-sizing:border-box;background:#f6f6f6;border-bottom:1px solid #e9e9e9;border-right:1px solid #e9e9e9;"></div><span style="top:1533.00px;font-size:13px;line-height:17px;color:#666;font-weight:bold;right:795.50px;transform-origin:100% 50%;word-spacing:.4px;">Include prices</span>
<div style="left:1130px;top:1536px;width:10px;height:10px;border:1px solid #ababab;border-radius:50%;background:linear-gradient(#ececec,#dcdcdc);"><i style="position:absolute;left:2.500px;top:2.500px;width:5px;height:5px;border-radius:50%;background:#555"></i></div>
<span style="top:1536.00px;font-size:13px;line-height:17px;color:#222;left:1151.50px;transform-origin:0 50%;">No</span>
<div style="left:1171px;top:1536px;width:10px;height:10px;border:1px solid #ababab;border-radius:50%;background:linear-gradient(#ececec,#dcdcdc);"></div>
<span style="top:1536.00px;font-size:13px;line-height:17px;color:#222;left:1193.30px;transform-origin:0 50%;">Yes</span>
<div style="left:963px;top:1557px;width:164px;height:25px;box-sizing:border-box;background:#f6f6f6;border-bottom:1px solid #e9e9e9;border-right:1px solid #e9e9e9;"></div><span style="top:1560.00px;font-size:13px;line-height:17px;color:#666;font-weight:bold;right:795.50px;transform-origin:100% 50%;word-spacing:.4px;">Exclude dimensions</span>
<div style="left:1130px;top:1563px;width:10px;height:10px;border:1px solid #ababab;border-radius:50%;background:linear-gradient(#ececec,#dcdcdc);"></div>
<span style="top:1563.00px;font-size:13px;line-height:17px;color:#222;left:1151.50px;transform-origin:0 50%;">No</span>
<div style="left:1171px;top:1563px;width:10px;height:10px;border:1px solid #ababab;border-radius:50%;background:linear-gradient(#ececec,#dcdcdc);"><i style="position:absolute;left:2.500px;top:2.500px;width:5px;height:5px;border-radius:50%;background:#555"></i></div>
<span style="top:1563.00px;font-size:13px;line-height:17px;color:#222;left:1193.30px;transform-origin:0 50%;">Yes</span>
<div style="left:963px;top:1584px;width:164px;height:28px;box-sizing:border-box;background:#f6f6f6;border-bottom:1px solid #e9e9e9;border-right:1px solid #e9e9e9;"></div><span style="top:1588.50px;font-size:13px;line-height:17px;color:#666;font-weight:bold;right:795.50px;transform-origin:100% 50%;word-spacing:.4px;">Weight approximation</span>
<div style="left:1130px;top:1590px;width:51px;height:16px;box-sizing:border-box;background:#fff;border:1px solid #b9b9b9;"></div>
<span style="top:1590.69px;font-size:11px;line-height:14px;color:#222;left:1186.50px;transform-origin:0 50%;">%</span>
<div style="left:963px;top:1614px;width:164px;height:28px;box-sizing:border-box;background:#f6f6f6;border-bottom:1px solid #e9e9e9;border-right:1px solid #e9e9e9;"></div><span style="top:1618.50px;font-size:13px;line-height:17px;color:#666;font-weight:bold;right:795.50px;transform-origin:100% 50%;word-spacing:.4px;">Dimension approximation</span>
<div style="left:1130px;top:1620px;width:51px;height:16px;box-sizing:border-box;background:#fff;border:1px solid #b9b9b9;"></div>
<span style="top:1620.69px;font-size:11px;line-height:14px;color:#222;left:1186.50px;transform-origin:0 50%;">%</span>
<div style="left:963px;top:1671px;width:894px;height:35px;box-sizing:border-box;background:#fff;border:1px solid #ccc;"></div><div style="left:980.5px;top:1671px;width:107.875px;height:1px;background:#fff;"></div><span style="top:1663.95px;font-size:14px;line-height:18px;color:#146295;font-weight:bold;left:1002.50px;transform-origin:0 50%;">Restrictions</span>
<div style="left:984px;top:1665.5px;width:10px;height:10px;border:1px solid #a8a8a8;border-radius:2.500px;background:linear-gradient(#ececec,#dadada);box-shadow:inset 0 1px 0 #f6f6f6;"></div>
<div style="left:963px;top:1723px;width:894px;height:41px;box-sizing:border-box;background:#fff;border:1px solid #ccc;"></div><div style="left:981px;top:1723px;width:86.09375px;height:1px;background:#fff;"></div><span style="top:1715.00px;font-size:13px;line-height:17px;color:#146295;font-weight:bold;left:984.00px;transform-origin:0 50%;">Access level</span>
<span style="top:1734.58px;font-size:9px;line-height:12px;color:#f22;left:981.00px;transform-origin:0 50%;">Only from HikaShop Business</span>
<span style="top:1804.19px;font-size:11px;line-height:14px;color:#222;left:656.00px;width:600px;text-align:center;transform-origin:50% 50%;">Joomla! 2.5.24</span>
<span style="top:1833.19px;font-size:11px;line-height:14px;color:#125c8e;left:768.00px;transform-origin:0 50%;white-space:pre;">Joomla!®</span>
<span style="top:1833.19px;font-size:11px;line-height:14px;color:#222;left:814.64px;transform-origin:0 50%;white-space:pre;"> is free software released under the </span>
<span style="top:1833.19px;font-size:11px;line-height:14px;color:#125c8e;left:990.27px;transform-origin:0 50%;white-space:pre;">GNU General Public License.</span>
<div style="left:1903px;top:85px;width:17px;height:1782px;background:#f1f1f1;"></div>
<svg style="left:1907px;top:92px" width="9" height="5" viewBox="0 0 9 5"><path d="M4.500 0.200 L8.800 4.800 H0.200 Z" fill="#505050"/></svg>
<svg style="left:1907px;top:912px" width="9" height="5" viewBox="0 0 9 5"><path d="M4.500 0.200 L8.800 4.800 H0.200 Z" fill="#505050"/></svg>
<svg style="left:1907px;top:1856px" width="9" height="5" viewBox="0 0 9 5"><path d="M4.500 4.800 L8.800 0.200 H0.200 Z" fill="#8a8a8a"/></svg>
<div style="left:1905px;top:198px;width:11px;height:449px;background:#c1c1c1;border:1px solid #a9a9a9;"></div>
<div style="left:1905px;top:1402px;width:11px;height:449px;background:#c1c1c1;border:1px solid #a9a9a9;"></div>
<div style="left:0px;top:0px;width:1920px;height:25px;background:#737373;"></div>
<svg style="left:0;top:0" width="1920" height="58" viewBox="0 0 1920 58">
<defs><linearGradient id="tbg" gradientUnits="userSpaceOnUse" x1="0" y1="0" x2="0" y2="58"><stop offset="0" stop-color="#f7f7f7"/><stop offset="0.420" stop-color="#fbfbfb"/><stop offset="0.550" stop-color="#f5f5f5"/><stop offset="1" stop-color="#e7e7e7"/></linearGradient></defs>
<path d="M236 24.500 C241 24.500 242 21 243.500 17 L247.500 5.500 C249 1.500 250.500 1 253.500 1 L427 1 C430 1 431.500 1.500 433 5.500 L437 17 C438.500 21 439.500 24.500 444.500 24.500 Z" fill="#c3c7cd" stroke="#5e5e5e" stroke-width="1"/><path d="M248 6.500 C249.500 2.500 251 2 254 2 L426.500 2 C429.500 2 431 2.500 432.500 6.500" fill="none" stroke="#d2d2d2" stroke-width="1"/>
<path d="M441 6.500 L463.500 6.500 C465.500 6.500 466.300 7 467 9 L471 19.800 L449 19.800 C447 19.800 446.200 19.300 445.500 17.300 Z" fill="#bbbfc5" stroke="#5f5f5f" stroke-width="1"/>
<path d="M-3 24.500 L43 24.500 C48 24.500 49 21 50.500 17 L54.500 5.500 C56 1.500 57.500 1 60.500 1 L234.500 1 C237.500 1 239 1.500 240.500 5.500 L244.500 17 C246 21 247 24.500 252 24.500 L1923 24.500 L1923 60 L-3 60 Z" fill="url(#tbg)" stroke="#555" stroke-width="1"/>
<path d="M55 6.500 C56.500 2.500 58 2 61 2 L234 2 C237 2 238.500 2.500 240 6.500" fill="none" stroke="#fff" stroke-width="1" opacity=".9"/>
</svg>
<svg style="left:0;top:0" width="40" height="25" viewBox="0 0 40 25"><path d="M16.300 24.500 C17 22 17.600 20.500 17.300 18.500 C15.500 16 13.800 12.500 13.800 8.500 C13.800 3 16.500 -1 21.500 -1 C27 -1 30.200 3 30.200 8 C30.200 12 29.500 15 28.300 17.500 C27.300 19.500 26 20.600 24.600 21 C24.200 22.200 24.200 23.300 24.300 24.500 Z" fill="#f2615e"/><path d="M22 0 C26.500 0 29.300 3.500 29.300 8 C29.300 12 28.500 15 27.500 17 C26.500 19 25 20 23.500 20.200 C20 19 18.500 14 18.500 8.500 C18.500 4 19.500 1 22 0 Z" fill="#fb7371"/></svg>
<svg style="left:62px;top:5px" width="16" height="16" viewBox="0 0 16 16">
<g fill="none" stroke-width="2.400" stroke-linecap="round">
<path d="M14 14 L10.200 6" stroke="#e8322c"/><path d="M2.400 13.800 L10 10" stroke="#4d8fd6"/>
<path d="M2.500 2.400 L6 10" stroke="#5cb030"/><path d="M14 2.400 L6 6" stroke="#f59a1d"/>
<path d="M10.200 6 L12 9.800" stroke="#e8322c"/>
</g>
<circle cx="2.500" cy="2.300" r="1.800" fill="#5cb030"/><circle cx="13.800" cy="2.300" r="1.800" fill="#f59a1d"/><circle cx="2.300" cy="13.800" r="1.800" fill="#4d8fd6"/><circle cx="13.900" cy="14" r="1.800" fill="#e8322c"/></svg>
<span style="top:4.84px;font-size:12px;line-height:16px;color:#111;left:82.50px;transform-origin:0 50%;transform:scaleX(0.9832);-webkit-mask-image:linear-gradient(90deg,#000 82%,rgba(0,0,0,.25) 100%);">Great Commission Coffee</span>
<svg style="left:226px;top:9px" width="9" height="9" viewBox="0 0 9 9"><path d="M1.300 1.300 L7.700 7.700 M7.700 1.300 L1.300 7.700" stroke="#555" stroke-width="1.900"/></svg>
<svg style="left:254px;top:5px" width="17" height="17" viewBox="0 0 17 17"><rect x="0.500" y="1.500" width="15" height="11.500" fill="#fff" stroke="#d9d9d9" stroke-width=".6"/><path d="M1.300 13 V2.300 L8 8.200 L14.700 2.300 V13" fill="none" stroke="#dd3b30" stroke-width="2.200" stroke-linejoin="miter"/><rect x="8.500" y="8.500" width="6.500" height="8" fill="#fff"/><text x="11.800" y="16" font-size="9.500" text-anchor="middle" font-family="Liberation Sans, sans-serif" fill="#111">0</text></svg>
<span style="top:4.84px;font-size:12px;line-height:16px;color:#4a4a4a;left:274.00px;transform-origin:0 50%;transform:scaleX(1.0045);-webkit-mask-image:linear-gradient(90deg,#000 85%,rgba(0,0,0,.2) 100%);">[HikaShop] No shipping n</span>
<svg style="left:418px;top:9px" width="9" height="9" viewBox="0 0 9 9"><path d="M1.300 1.300 L7.700 7.700 M7.700 1.300 L1.300 7.700" stroke="#5d5d5d" stroke-width="1.900"/></svg>
<div style="left:1872px;top:0px;width:45px;height:19px;background:#c9504f;"></div>
<svg style="left:1890px;top:5px" width="10" height="10" viewBox="0 0 10 10"><path d="M1.300 1.300 L8.700 8.200 M8.700 1.300 L1.300 8.200" stroke="#fff" stroke-width="2"/></svg>
<div style="left:1828px;top:11px;width:8px;height:2px;background:#1d1d1d;"></div>
<svg style="left:1853px;top:4px" width="11" height="11" viewBox="0 0 11 11"><path d="M2.500 2.500 V0.500 H10.500 V7.500 H8.500" fill="none" stroke="#1d1d1d" stroke-width="1"/><rect x="0.500" y="3" width="8" height="7" fill="none" stroke="#1d1d1d" stroke-width="1"/><path d="M0.500 3.500 H8.500" stroke="#1d1d1d" stroke-width="1.600"/></svg>
<svg style="left:9px;top:35px" width="18" height="15" viewBox="0 0 18 15"><path d="M8 1.200 L2 7.500 L8 13.800 M2.500 7.500 H16.500" fill="none" stroke="#4f4f4f" stroke-width="2.500" stroke-linejoin="round" stroke-linecap="round"/></svg>
<svg style="left:38px;top:35px" width="18" height="15" viewBox="0 0 18 15"><path d="M10 1.200 L16 7.500 L10 13.800 M15.500 7.500 H1.500" fill="none" stroke="#c8c8c8" stroke-width="2.500" stroke-linejoin="round" stroke-linecap="round"/></svg>
<svg style="left:67px;top:34px" width="17" height="17" viewBox="0 0 17 17"><path d="M13.200 5.200 A6 6 0 1 0 14.400 10.500" fill="none" stroke="#4f4f4f" stroke-width="2.600"/><path d="M9 7.300 L15.800 7.300 L15.800 0.800 Z" fill="#4f4f4f"/></svg>
<div style="left:94px;top:29px;width:1470px;height:27px;box-sizing:border-box;background:#fff;border:1px solid #a9a9a9;border-top-color:#9a9a9a;border-radius:3px;box-shadow:inset 0 1px 1px rgba(0,0,0,.08);"></div>
<svg style="left:101px;top:35px" width="13" height="16" viewBox="0 0 13 16"><path d="M1 0.800 H7.500 L11.500 4.800 V15 H1 Z" fill="#fdfdfd" stroke="#a0a0a0" stroke-width="1"/><path d="M7.500 0.800 V4.800 H11.500" fill="#e4e4e4" stroke="#a0a0a0" stroke-width="1"/></svg>
<span style="top:31.96px;font-size:16px;line-height:21px;color:#111;left:120.00px;transform-origin:0 50%;transform:scaleX(0.9480);">gccoffee.com</span>
<span style="top:31.96px;font-size:16px;line-height:21px;color:#7c7c7c;left:210.30px;transform-origin:0 50%;transform:scaleX(1.0035);">/administrator/index.php?option=com_hikashop</span>
<span style="top:31.96px;font-size:16px;line-height:21px;color:#7c7c7c;left:547.50px;transform-origin:0 50%;transform:scaleX(1.0390);">&amp;ctrl=plugins</span>
<span style="top:31.96px;font-size:16px;line-height:21px;color:#7c7c7c;left:643.20px;transform-origin:0 50%;transform:scaleX(1.0260);">&amp;plugin_type=shipping</span>
<span style="top:31.96px;font-size:16px;line-height:21px;color:#7c7c7c;left:809.00px;transform-origin:0 50%;transform:scaleX(1.0638);">&amp;task=edit</span>
<span style="top:31.96px;font-size:16px;line-height:21px;color:#7c7c7c;left:889.00px;transform-origin:0 50%;transform:scaleX(1.0015);">&amp;name=ups</span>
<span style="top:31.96px;font-size:16px;line-height:21px;color:#7c7c7c;left:975.00px;transform-origin:0 50%;transform:scaleX(1.0060);">&amp;subtask=shipping_edit</span>
<span style="top:31.96px;font-size:16px;line-height:21px;color:#7c7c7c;left:1145.60px;transform-origin:0 50%;transform:scaleX(1.0132);">&amp;shipping_id=1</span>
<svg style="left:1541px;top:33px" width="20" height="19" viewBox="0 0 20 19"><path d="M10 1.500 L12.500 7.200 L18.700 7.700 L14 11.800 L15.400 17.800 L10 14.600 L4.600 17.800 L6 11.800 L1.300 7.700 L7.500 7.200 Z" fill="#fff" stroke="#7a7a7a" stroke-width="1.300" stroke-linejoin="round"/></svg>
<span style="top:29.42px;font-size:19px;line-height:25px;color:#1a1a1a;font-weight:bold;left:1284.00px;width:600px;text-align:center;transform-origin:50% 50%;font-family:'Liberation Serif',serif;font-style:italic;">f?</span>
<svg style="left:1606px;top:34px" width="18" height="18" viewBox="-9 -9 18 18"><g fill="#2b2b2b"><circle r="6"/><rect x="-1.800" y="-8.300" width="3.600" height="5" rx=".6" transform="rotate(0)"/><rect x="-1.800" y="-8.300" width="3.600" height="5" rx=".6" transform="rotate(45)"/><rect x="-1.800" y="-8.300" width="3.600" height="5" rx=".6" transform="rotate(90)"/><rect x="-1.800" y="-8.300" width="3.600" height="5" rx=".6" transform="rotate(135)"/><rect x="-1.800" y="-8.300" width="3.600" height="5" rx=".6" transform="rotate(180)"/><rect x="-1.800" y="-8.300" width="3.600" height="5" rx=".6" transform="rotate(225)"/><rect x="-1.800" y="-8.300" width="3.600" height="5" rx=".6" transform="rotate(270)"/><rect x="-1.800" y="-8.300" width="3.600" height="5" rx=".6" transform="rotate(315)"/></g><circle r="2.700" fill="#efefef"/></svg>
<svg style="left:1638px;top:32px" width="26" height="26" viewBox="0 0 26 26"><rect x="0.500" y="1" width="17" height="17" rx="3" fill="#c8102e"/><rect x="1.500" y="2" width="15" height="7" rx="2.500" fill="#e0344d" opacity=".7"/><g stroke="#fff" stroke-width="2.600" stroke-linecap="butt"><path d="M9 3.500 V15.500 M3.800 6.500 L14.200 12.500 M14.200 6.500 L3.800 12.500"/></g><rect x="13" y="14" width="11" height="10" rx="1.500" fill="#5a5a5a" stroke="#eee" stroke-width=".8"/></svg>
<span style="top:45.03px;font-size:10px;line-height:13px;color:#fff;font-weight:bold;left:1356.50px;width:600px;text-align:center;transform-origin:50% 50%;">1</span>
<div style="left:1670px;top:34px;width:18px;height:17px;box-sizing:border-box;background:linear-gradient(#cfcfcf,#b2b2b2);border:1px solid #a2a2a2;"></div>
<span style="top:36.19px;font-size:11px;line-height:14px;color:#909090;left:1379.00px;width:600px;text-align:center;transform-origin:50% 50%;">In</span>
<svg style="left:1701px;top:32px" width="21" height="21" viewBox="0 0 21 21"><rect x="1" y="1" width="19" height="19" rx="2.500" fill="#8fb8d8" stroke="#41749e" stroke-width="1.200"/><rect x="2.200" y="2.200" width="16.600" height="8" rx="2" fill="#b4d2e8" opacity=".8"/><path d="M10.500 4.800 L12.100 8.600 L16.200 8.900 L13.100 11.600 L14.100 15.700 L10.500 13.500 L6.900 15.700 L7.900 11.600 L4.800 8.900 L8.900 8.600 Z" fill="#1d4a73"/></svg>
<svg style="left:1735px;top:35px" width="16" height="16" viewBox="0 0 16 16"><circle cx="8" cy="8" r="7.600" fill="#3c3c3c"/><path d="M8 3 V8.300 L11.500 10.800" fill="none" stroke="#f0f0f0" stroke-width="1.700"/></svg>
<svg style="left:1766px;top:34px" width="18" height="17" viewBox="-9 -9.500 18 17"><g fill="#3a3a3a"><circle r="1.700"/><path d="M0 0 L-4.300 -7.450 A8.600 8.600 0 0 1 4.300 -7.450 Z" transform="rotate(60)"/><path d="M0 0 L-4.300 -7.450 A8.600 8.600 0 0 1 4.300 -7.450 Z" transform="rotate(180)"/><path d="M0 0 L-4.300 -7.450 A8.600 8.600 0 0 1 4.300 -7.450 Z" transform="rotate(300)"/></g><circle r="2.700" fill="none" stroke="#efefef" stroke-width="1.200"/></svg>
<svg style="left:1798px;top:33px" width="18" height="20" viewBox="0 0 18 20"><path d="M1 0.500 H17 L15.500 16.500 L9 19.500 L2.500 16.500 Z" fill="#e8521f"/><path d="M9 2 H15.400 L14.200 15.300 L9 17.700 Z" fill="#f47a3a"/><path d="M5 5 L5.300 12.500 H12.700 L13 5 M5.200 8.500 L9 10.500 L12.800 8.500" fill="none" stroke="#fff" stroke-width="1.500"/></svg>
<svg style="left:1830px;top:33px" width="20" height="19" viewBox="0 0 20 19"><rect x="14" y="0.500" width="5" height="17" fill="#2a2a2a"/><rect x="0.500" y="4" width="15" height="14.500" rx="1" fill="#3667c9"/><rect x="0.500" y="4" width="15" height="3.500" fill="#5c8ae6"/><g fill="#fff"><rect x="3.0" y="9" width="2.300" height="1.900"/><rect x="6.6" y="9" width="2.300" height="1.900"/><rect x="10.2" y="9" width="2.300" height="1.900"/><rect x="3.0" y="12" width="2.300" height="1.900"/><rect x="6.6" y="12" width="2.300" height="1.900"/><rect x="10.2" y="12" width="2.300" height="1.900"/><rect x="3.0" y="15" width="2.300" height="1.900"/><rect x="6.6" y="15" width="2.300" height="1.900"/><rect x="10.2" y="15" width="2.300" height="1.900"/></g></svg>
<svg style="left:1861px;top:33px" width="21" height="19" viewBox="0 0 21 19"><rect x="3" y="3.500" width="15" height="12" fill="#fff" stroke="#2f7fc2" stroke-width="1.400"/><rect x="3" y="3.500" width="15" height="3" fill="#2f7fc2"/><g fill="none" stroke="#2f7fc2" stroke-width="1.300"><path d="M0.700 4 V0.700 H4 M17 0.700 H20.300 V4 M20.300 15 V18.300 H17 M4 18.300 H0.700 V15"/></g></svg>
<svg style="left:1896px;top:35px" width="16" height="16" viewBox="0 0 16 16"><path d="M3.300 2.500 H13.700 M3.300 8 H13.700 M3.300 13.500 H13.700" stroke="#3c3c3c" stroke-width="3" stroke-linecap="round"/></svg>
<div style="left:0px;top:57px;width:1920px;height:27px;background:linear-gradient(#e9e9e9,#e1e1e1);border-bottom:1px solid #a6a6a6;"></div>
<svg style="left:7px;top:62px" width="16" height="16" viewBox="0 0 16 16"><defs><linearGradient id="nvg" x1="0" y1="0" x2="0" y2="1"><stop offset="0" stop-color="#5fd246"/><stop offset="1" stop-color="#1c9a10"/></linearGradient></defs><rect x="0.300" y="0.300" width="15.400" height="15.400" rx="2.500" fill="url(#nvg)"/><path d="M8 3.800 V12.200 M3.800 8 H12.200" stroke="#fff" stroke-width="2.300"/></svg>
<span style="top:61.84px;font-size:12px;line-height:16px;color:#151515;left:28.50px;transform-origin:0 50%;transform:scaleX(0.9594);">NetVibes</span>
<svg style="left:88px;top:63px" width="15" height="14" viewBox="0 0 15 14"><rect x="0.500" y="0.500" width="13" height="11" fill="#f4f4f4" stroke="#cfcfcf" stroke-width=".6"/><path d="M1 2 H13" stroke="#d94b3c" stroke-width="1.600"/><rect x="1.800" y="4.500" width="4.200" height="3.600" fill="none" stroke="#555" stroke-width="1.100"/><path d="M7.500 4.800 H12.500 M7.500 6.800 H12.500 M7.500 8.800 H12 M6 11.500 H10.500" stroke="#888" stroke-width="1"/><path d="M9 13.500 L13.500 9.500 V13.500 Z" fill="#aaa"/></svg>
<span style="top:61.84px;font-size:12px;line-height:16px;color:#151515;left:108.50px;transform-origin:0 50%;transform:scaleX(0.9328);">News</span>
<svg style="left:149px;top:63px" width="17" height="17" viewBox="0 0 17 17"><rect x="0.500" y="1.500" width="15" height="11.500" fill="#fff" stroke="#d9d9d9" stroke-width=".6"/><path d="M1.300 13 V2.300 L8 8.200 L14.700 2.300 V13" fill="none" stroke="#dd3b30" stroke-width="2.200" stroke-linejoin="miter"/></svg>
<span style="top:61.84px;font-size:12px;line-height:16px;color:#151515;left:170.50px;transform-origin:0 50%;transform:scaleX(0.9657);">Gmail - L</span>
<svg style="left:230px;top:61px" width="17" height="17" viewBox="0 0 17 17"><rect x="0.500" y="1.500" width="15" height="11.500" fill="#fff" stroke="#d9d9d9" stroke-width=".6"/><path d="M1.300 13 V2.300 L8 8.200 L14.700 2.300 V13" fill="none" stroke="#dd3b30" stroke-width="2.200" stroke-linejoin="miter"/><rect x="8.500" y="8.500" width="6.500" height="8" fill="#fff"/><text x="11.800" y="16" font-size="9.500" text-anchor="middle" font-family="Liberation Sans, sans-serif" fill="#111">0</text></svg>
<span style="top:61.84px;font-size:12px;line-height:16px;color:#151515;left:251.50px;transform-origin:0 50%;transform:scaleX(0.9688);">Inbox - B</span>
<div style="left:310px;top:62px;width:16px;height:16px;background:#4285f4;border-radius:2px;"></div>
<span style="top:65.53px;font-size:10px;line-height:13px;color:#fff;left:18.00px;width:600px;text-align:center;transform-origin:50% 50%;letter-spacing:-.3px;">17</span>
<div style="left:313px;top:63.5px;width:2px;height:2px;background:#cfe0ff;"></div>
<div style="left:321px;top:63.5px;width:2px;height:2px;background:#cfe0ff;"></div>
<span style="top:61.84px;font-size:12px;line-height:16px;color:#151515;left:331.50px;transform-origin:0 50%;transform:scaleX(0.9548);">Calendar</span>
<span style="top:61.84px;font-size:12px;line-height:16px;color:#151515;left:411.00px;transform-origin:0 50%;transform:scaleX(0.9625);">WHMCS - HG</span>
<span style="top:61.50px;font-size:13px;line-height:17px;color:#f78d1e;font-weight:bold;left:496.00px;transform-origin:0 50%;letter-spacing:-.6px;">cP</span>
<span style="top:61.84px;font-size:12px;line-height:16px;color:#151515;left:517.50px;transform-origin:0 50%;transform:scaleX(1.0096);">WHM-HG</span>
<span style="top:61.50px;font-size:13px;line-height:17px;color:#f78d1e;font-weight:bold;left:582.50px;transform-origin:0 50%;letter-spacing:-.6px;">cP</span>
<span style="top:61.84px;font-size:12px;line-height:16px;color:#151515;left:603.50px;transform-origin:0 50%;transform:scaleX(0.9595);">WHM - BSHC</span>
<span style="top:61.50px;font-size:13px;line-height:17px;color:#f78d1e;font-weight:bold;left:688.00px;transform-origin:0 50%;letter-spacing:-.6px;">cP</span>
<span style="top:61.84px;font-size:12px;line-height:16px;color:#151515;left:708.00px;transform-origin:0 50%;transform:scaleX(0.9201);">BSHC cPanel</span>
<span style="top:61.50px;font-size:13px;line-height:17px;color:#f78d1e;font-weight:bold;left:788.50px;transform-origin:0 50%;letter-spacing:-.6px;">cP</span>
<span style="top:61.84px;font-size:12px;line-height:16px;color:#151515;left:809.50px;transform-origin:0 50%;transform:scaleX(0.9900);">WHM-PK</span>
<svg style="left:870px;top:62px" width="16" height="16" viewBox="0 0 16 16"><circle cx="8" cy="8" r="6.800" fill="none" stroke="#d6249f" stroke-width="1.500"/><circle cx="8" cy="8.500" r="3.600" fill="none" stroke="#d6249f" stroke-width="1.400"/><circle cx="8" cy="9" r="1.300" fill="#d6249f"/></svg>
<span style="top:61.84px;font-size:12px;line-height:16px;color:#151515;left:892.50px;transform-origin:0 50%;transform:scaleX(0.9274);">Life360</span>
<svg style="left:942px;top:62px" width="13" height="17" viewBox="0 0 13 17"><circle cx="5" cy="3.500" r="2.600" fill="#d9b98a" stroke="#7a6a52" stroke-width=".8"/><path d="M3 7 C2 10 3 12 5 12.500 L4.500 16 M6 7 C8 8 9 10 8 12.500 L9.500 16" fill="none" stroke="#6a5a46" stroke-width="1.300"/><rect x="6.500" y="9" width="5.500" height="5" fill="#e9e1d2" stroke="#8a7a62" stroke-width=".7"/></svg>
<span style="top:61.84px;font-size:12px;line-height:16px;color:#151515;left:962.50px;transform-origin:0 50%;transform:scaleX(1.0311);">Outright</span>
<div style="left:1019px;top:62px;width:15px;height:15px;background:#f26f21;border-radius:1.500px;"></div>
<span style="top:64.08px;font-size:9px;line-height:12px;color:#fff;font-weight:bold;left:726.50px;width:600px;text-align:center;transform-origin:50% 50%;">W</span>
<span style="top:61.84px;font-size:12px;line-height:16px;color:#151515;left:1040.00px;transform-origin:0 50%;transform:scaleX(0.9404);">Responsive Samples</span>
<svg style="left:1158px;top:62px" width="16" height="16" viewBox="0 0 16 16"><rect x="0.500" y="0.500" width="15" height="15" rx="1.500" fill="#1e9b52"/><rect x="3" y="3.200" width="10" height="9.600" fill="#fff"/><path d="M3 6.400 H13 M3 9.600 H13 M6.500 3.200 V12.800" stroke="#1e9b52" stroke-width="1.100"/></svg>
<span style="top:61.84px;font-size:12px;line-height:16px;color:#151515;left:1179.00px;transform-origin:0 50%;transform:scaleX(1.0160);">Migration List</span>
<svg style="left:1264px;top:63px" width="16" height="14" viewBox="0 0 16 14"><path d="M0.600 2 C0.600 1.200 1.200 0.600 2 0.600 H5.500 L7 2.300 H14 C14.800 2.300 15.400 2.900 15.400 3.700 V12 C15.400 12.800 14.800 13.400 14 13.400 H2 C1.200 13.400 0.600 12.800 0.600 12 Z" fill="#f7d384" stroke="#b98a3c" stroke-width="1"/><path d="M1.400 4.600 H14.600 V12 C14.600 12.400 14.400 12.600 14 12.600 H2 C1.600 12.600 1.400 12.400 1.400 12 Z" fill="#fce3a6"/></svg>
<span style="top:61.84px;font-size:12px;line-height:16px;color:#151515;left:1285.00px;transform-origin:0 50%;transform:scaleX(0.8654);">Favs</span>
<svg style="left:1320px;top:62px" width="15" height="17" viewBox="0 0 15 17"><path d="M7.500 0.800 C11.500 0.800 13.500 3.500 13.500 7 C13.500 11.500 10.500 16 7.500 16 C4.500 16 1.500 11.500 1.500 7 C1.500 3.500 3.500 0.800 7.500 0.800 Z" fill="#e04a44"/><path d="M2.200 6.200 H12.800 V9 C10 10 5 10 2.200 9 Z" fill="#f3d9c2"/><circle cx="5.300" cy="7.700" r=".9" fill="#333"/><circle cx="9.700" cy="7.700" r=".9" fill="#333"/></svg>
<span style="top:61.84px;font-size:12px;line-height:16px;color:#151515;left:1341.50px;transform-origin:0 50%;transform:scaleX(0.9264);">CSSChopper</span>
<svg style="left:1418px;top:63px" width="18" height="14" viewBox="0 0 18 14"><path d="M4.500 13 C2 13 0.600 11.300 0.600 9.300 C0.600 7.400 2 6 3.800 5.800 C4.300 3 6.500 1 9.300 1 C12 1 14 2.800 14.600 5.200 C16.300 5.600 17.400 7.100 17.400 9 C17.400 11.300 15.800 13 13.500 13 Z" fill="#5b5b5b"/><path d="M5 9 C5 7.500 7.500 7.500 9 9 C10.500 10.500 13 10.500 13 9 C13 7.500 10.500 7.500 9 9 C7.500 10.500 5 10.500 5 9 Z" fill="none" stroke="#f1f1f1" stroke-width="1.200"/></svg>
<span style="top:61.84px;font-size:12px;line-height:16px;color:#151515;left:1443.00px;transform-origin:0 50%;transform:scaleX(0.9326);">Adjust BG JSFiddle</span>
<div style="left:1791px;top:61px;width:1px;height:20px;background:#cdcdcd;"></div>
<svg style="left:1799px;top:63px" width="16" height="14" viewBox="0 0 16 14"><path d="M0.600 2 C0.600 1.200 1.200 0.600 2 0.600 H5.500 L7 2.300 H14 C14.800 2.300 15.400 2.900 15.400 3.700 V12 C15.400 12.800 14.800 13.400 14 13.400 H2 C1.200 13.400 0.600 12.800 0.600 12 Z" fill="#f7d384" stroke="#b98a3c" stroke-width="1"/><path d="M1.400 4.600 H14.600 V12 C14.600 12.400 14.400 12.600 14 12.600 H2 C1.600 12.600 1.400 12.400 1.400 12 Z" fill="#fce3a6"/></svg>
<span style="top:61.84px;font-size:12px;line-height:16px;color:#151515;left:1820.50px;transform-origin:0 50%;transform:scaleX(0.9944);">Other bookmarks</span>
</div></body></html>
